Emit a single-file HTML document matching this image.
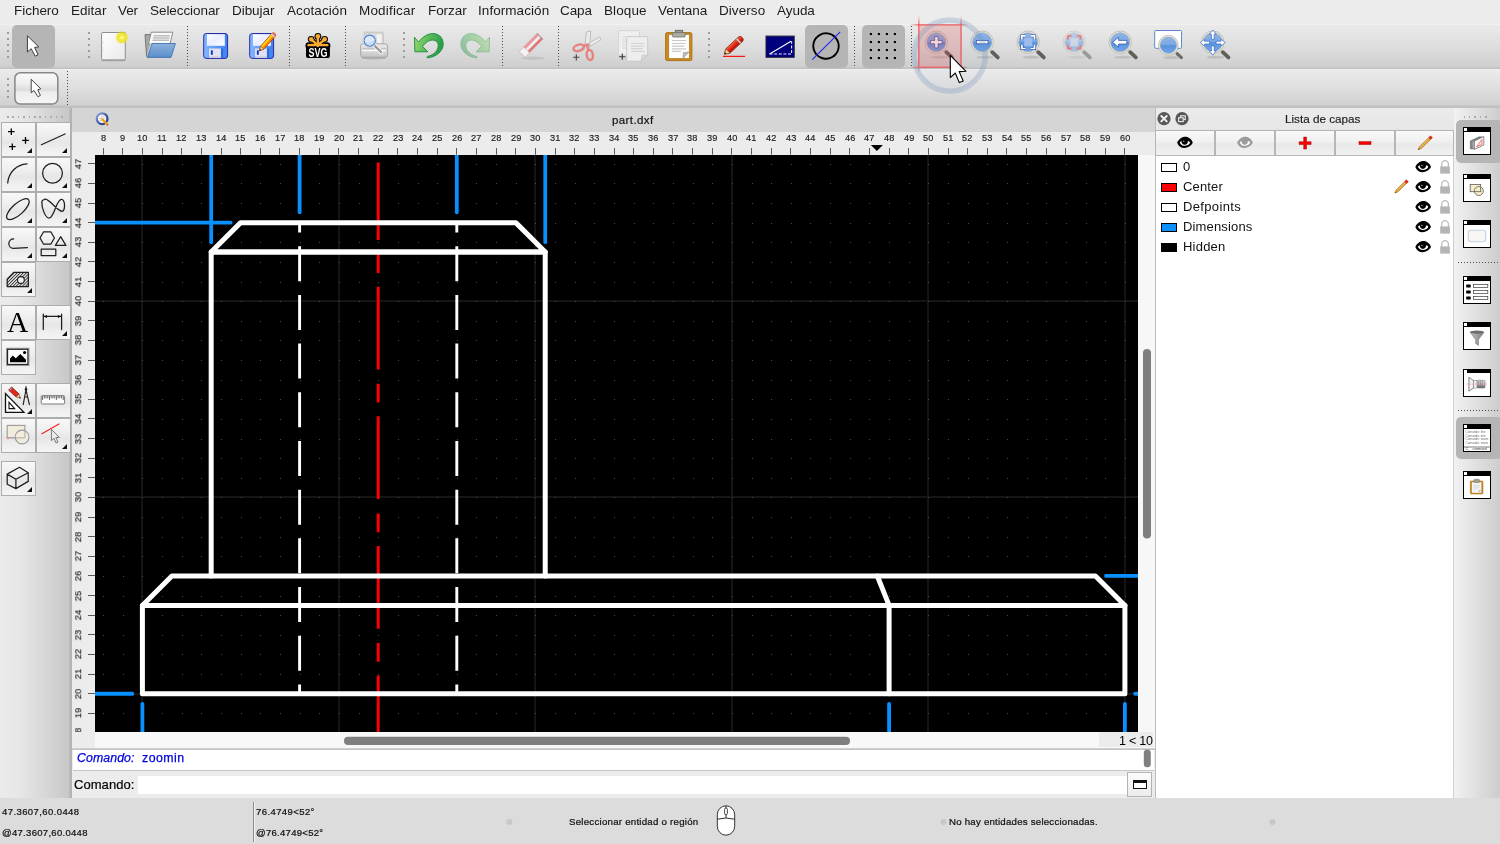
<!DOCTYPE html>
<html lang="es"><head><meta charset="utf-8"><title>QCAD - part.dxf</title>
<style>

html,body{margin:0;padding:0;}
body{width:1500px;height:844px;overflow:hidden;position:relative;background:#ececec;font-family:"Liberation Sans",sans-serif;}
.t{position:absolute;white-space:nowrap;will-change:transform;}
.a{position:absolute;}
svg{position:absolute;overflow:visible;will-change:transform;}
#menubar{position:absolute;left:0;top:0;width:1500px;height:22px;background:#ececec;}
#tb1{position:absolute;left:0;top:22px;width:1500px;height:47px;background:linear-gradient(#ececec 0,#ececec 2px,#f4f4f4 2px,#e9e9e9 3.5px,#dedede 24px,#cfcfcf 44.5px,#c3c3c3 46px,#bfbfbf 47px);}
#tb2{position:absolute;left:0;top:69px;width:1500px;height:38px;background:linear-gradient(#f1f1f1 0,#eaeaea 1.5px,#dfdfdf 19px,#d1d1d1 35.5px,#c4c4c4 37px,#bdbdbd 38px);}
#sep107{position:absolute;left:0;top:107px;width:1500px;height:1px;background:#c0c0c0;}
.sel{position:absolute;background:#b5b5b5;border-radius:5px;}
.grip{position:absolute;width:2px;height:2px;background:#9c9c9c;}
.vsep{position:absolute;width:1px;background:repeating-linear-gradient(180deg,#4a4a4a 0,#4a4a4a 1px,transparent 1px,transparent 3px);}
#toolbox{position:absolute;left:0;top:108px;width:72px;height:690px;background:linear-gradient(90deg,#ebebeb 0%,#e6e6e6 30%,#c8c8c8 95%,#b4b4b4 98%,#b4b4b4 100%);}
.tbtn{position:absolute;width:33px;height:33px;border:1px solid #adadad;background:linear-gradient(#f8f8f8 0%,#efefef 35%,#e6e6e6 58%,#efefef 80%,#f4f4f4 100%);box-sizing:content-box;}
.tbtn:after{content:"";position:absolute;right:3.2px;bottom:3.2px;border-style:solid;border-width:0 0 5.2px 5.2px;border-color:transparent transparent #111 transparent;}
.tbtn.na:after{display:none;}
#main{position:absolute;left:72px;top:108px;width:1083px;height:690px;background:#ececec;}
#tabbar{position:absolute;left:0;top:0;width:1083px;height:24px;background:#d5d5d5;}
#canvas{position:absolute;left:23px;top:47px;width:1043px;height:577px;background:#000;overflow:hidden;}
#layers{position:absolute;left:1155px;top:108px;width:299px;height:690px;background:#fff;}
#rtb{position:absolute;left:1454px;top:108px;width:46px;height:690px;background:linear-gradient(90deg,#f2f2f2 0%,#e8e8e8 25%,#cdcdcd 100%);}
#status{position:absolute;left:0;top:798px;width:1500px;height:46px;background:#dcdcdc;}
.lbtn{position:absolute;top:22px;height:26px;border:1px solid #b6b6b6;background:linear-gradient(#f9f9f9,#f0f0f0 45%,#e8e8e8 55%,#f1f1f1);box-sizing:border-box;}
.ricon{position:absolute;left:9px;width:26px;height:26px;border:1px solid #000;background:#fff;}
.ricon:before{content:"";position:absolute;left:0;top:0;width:26px;height:3.8px;background:#000;}
.ricon:after{content:"";position:absolute;left:0;top:0;width:3.4px;height:3.2px;background:#fff;}
.hsep{position:absolute;left:4px;width:42px;height:1px;background:repeating-linear-gradient(90deg,#4a4a4a 0,#4a4a4a 1px,transparent 1px,transparent 3px);}

</style></head>
<body>
<div id="menubar"><div class="t" style="left:13.80px;top:3.38px;font-size:13.5px;line-height:15.08px;color:#1c1c1c;letter-spacing:-0.031px;">Fichero</div><div class="t" style="left:70.60px;top:3.38px;font-size:13.5px;line-height:15.08px;color:#1c1c1c;letter-spacing:0.022px;">Editar</div><div class="t" style="left:117.70px;top:3.38px;font-size:13.5px;line-height:15.08px;color:#1c1c1c;letter-spacing:-0.121px;">Ver</div><div class="t" style="left:149.90px;top:3.38px;font-size:13.5px;line-height:15.08px;color:#1c1c1c;letter-spacing:-0.067px;">Seleccionar</div><div class="t" style="left:231.90px;top:3.38px;font-size:13.5px;line-height:15.08px;color:#1c1c1c;letter-spacing:-0.052px;">Dibujar</div><div class="t" style="left:286.80px;top:3.38px;font-size:13.5px;line-height:15.08px;color:#1c1c1c;letter-spacing:0.079px;">Acotación</div><div class="t" style="left:359.00px;top:3.38px;font-size:13.5px;line-height:15.08px;color:#1c1c1c;letter-spacing:0.182px;">Modificar</div><div class="t" style="left:427.50px;top:3.38px;font-size:13.5px;line-height:15.08px;color:#1c1c1c;letter-spacing:-0.067px;">Forzar</div><div class="t" style="left:477.50px;top:3.38px;font-size:13.5px;line-height:15.08px;color:#1c1c1c;letter-spacing:0.061px;">Información</div><div class="t" style="left:560.20px;top:3.38px;font-size:13.5px;line-height:15.08px;color:#1c1c1c;letter-spacing:-0.093px;">Capa</div><div class="t" style="left:603.50px;top:3.38px;font-size:13.5px;line-height:15.08px;color:#1c1c1c;letter-spacing:0.094px;">Bloque</div><div class="t" style="left:657.90px;top:3.38px;font-size:13.5px;line-height:15.08px;color:#1c1c1c;letter-spacing:-0.050px;">Ventana</div><div class="t" style="left:718.50px;top:3.38px;font-size:13.5px;line-height:15.08px;color:#1c1c1c;letter-spacing:0.063px;">Diverso</div><div class="t" style="left:776.90px;top:3.38px;font-size:13.5px;line-height:15.08px;color:#1c1c1c;letter-spacing:-0.047px;">Ayuda</div></div>
<div id="tb1"><div class="grip" style="left:7px;top:10px"></div><div class="grip" style="left:7px;top:16px"></div><div class="grip" style="left:7px;top:22px"></div><div class="grip" style="left:7px;top:28px"></div><div class="grip" style="left:7px;top:34px"></div><div class="sel" style="left:12px;top:3px;width:43px;height:43px"></div><div class="grip" style="left:88px;top:10px"></div><div class="grip" style="left:88px;top:16px"></div><div class="grip" style="left:88px;top:22px"></div><div class="grip" style="left:88px;top:28px"></div><div class="grip" style="left:88px;top:34px"></div><div class="vsep" style="left:187px;top:4px;height:41px"></div><div class="vsep" style="left:289px;top:4px;height:41px"></div><div class="vsep" style="left:345px;top:4px;height:41px"></div><div class="vsep" style="left:502px;top:4px;height:41px"></div><div class="vsep" style="left:558px;top:4px;height:41px"></div><div class="vsep" style="left:854px;top:4px;height:41px"></div><div class="vsep" style="left:911px;top:4px;height:41px"></div><div class="grip" style="left:403px;top:10px"></div><div class="grip" style="left:403px;top:16px"></div><div class="grip" style="left:403px;top:22px"></div><div class="grip" style="left:403px;top:28px"></div><div class="grip" style="left:403px;top:34px"></div><div class="grip" style="left:708px;top:10px"></div><div class="grip" style="left:708px;top:16px"></div><div class="grip" style="left:708px;top:22px"></div><div class="grip" style="left:708px;top:28px"></div><div class="grip" style="left:708px;top:34px"></div><div class="sel" style="left:805px;top:3px;width:43px;height:43px"></div><div class="sel" style="left:862px;top:3px;width:43px;height:43px"></div><svg style="left:0;top:0" width="1500" height="47" viewBox="0 22 1500 47"><defs>
<linearGradient id="gPaper" x1="0" y1="0" x2="1" y2="1"><stop offset="0" stop-color="#fff"/><stop offset="1" stop-color="#e9e9e9"/></linearGradient>
<radialGradient id="gGlow"><stop offset="0" stop-color="#fffff0"/><stop offset="0.25" stop-color="#f6ee50"/><stop offset="0.6" stop-color="#eee420" stop-opacity="0.95"/><stop offset="1" stop-color="#e8e020" stop-opacity="0"/></radialGradient>
<linearGradient id="gFold" x1="0" y1="0" x2="0" y2="1"><stop offset="0" stop-color="#8db2dd"/><stop offset="1" stop-color="#5a8ecb"/></linearGradient>
<linearGradient id="gFlop" x1="0" y1="0" x2="1" y2="0"><stop offset="0" stop-color="#86b8ff"/><stop offset="0.5" stop-color="#5a9af8"/><stop offset="1" stop-color="#3d82ee"/></linearGradient>
<linearGradient id="gLabel" x1="0" y1="0" x2="1" y2="1"><stop offset="0" stop-color="#fff"/><stop offset="0.5" stop-color="#e9edff"/><stop offset="1" stop-color="#fff"/></linearGradient>
<linearGradient id="gPen" x1="0" y1="0" x2="0" y2="1"><stop offset="0" stop-color="#ffdf30"/><stop offset="0.45" stop-color="#ffd000"/><stop offset="0.55" stop-color="#ff9800"/><stop offset="1" stop-color="#f07800"/></linearGradient>
<linearGradient id="gUndo" x1="0" y1="0" x2="1" y2="0.3"><stop offset="0" stop-color="#a2dc70"/><stop offset="0.5" stop-color="#5cbc5a"/><stop offset="1" stop-color="#2c9c4c"/></linearGradient>
<linearGradient id="gLens" x1="0" y1="0" x2="0" y2="1"><stop offset="0" stop-color="#8fb5e8"/><stop offset="0.48" stop-color="#7aa7e2"/><stop offset="0.5" stop-color="#5a92dc"/><stop offset="1" stop-color="#6fa6ea"/></linearGradient>
<linearGradient id="gPrn" x1="0" y1="0" x2="0" y2="1"><stop offset="0" stop-color="#e9e9e9"/><stop offset="1" stop-color="#c6c6c6"/></linearGradient>
<linearGradient id="gRedPen" x1="0" y1="0" x2="0" y2="1"><stop offset="0" stop-color="#f46a50"/><stop offset="0.5" stop-color="#e22418"/><stop offset="1" stop-color="#b01008"/></linearGradient>
</defs><path d="M27.4 35.8 V52 L31.2 48.7 L35.2 56.2 L38.1 54.7 L34.6 47.5 L38.7 46.8 Z" fill="#fff" stroke="#3c3c3c" stroke-width="1" stroke-linejoin="round"/><rect x="101.6" y="59.2" width="23.8" height="2" rx="1" fill="#8a8a8a" opacity="0.55"/><rect x="101.6" y="32.5" width="23.7" height="27.4" rx="1.2" fill="url(#gPaper)" stroke="#8e8e8e" stroke-width="1"/><rect x="103" y="42" width="1.2" height="0.8" fill="#ccc"/><rect x="103" y="49.5" width="1.2" height="0.8" fill="#ccc"/><circle cx="121.9" cy="37.5" r="7" fill="url(#gGlow)"/><path d="M145 34.6 H151 L150 56.3 H146.6 Z" fill="#a9a9a9" stroke="#6d6d6d" stroke-width="0.9" stroke-linejoin="round"/><path d="M151.3 32.2 H172.8 L170 44 H148.4 Z" fill="#f9f9f9" stroke="#808080" stroke-width="0.9" stroke-linejoin="round"/><path d="M153.5 35.8 H170 M153 38 H169.5 M152.5 40.3 H169" stroke="#bdbdbd" stroke-width="1.5"/><path d="M151.2 43.6 V44 L147.5 56.6" fill="none" stroke="#fff" stroke-width="1.2"/><path d="M152 43.5 H175.4 L171 57.4 H147.3 Z" fill="url(#gFold)" stroke="#3f73b0" stroke-width="0.9" stroke-linejoin="round"/><rect x="203.7" y="33.5" width="23.9" height="24.9" rx="2.6" fill="url(#gFlop)" stroke="#2a2aa6" stroke-width="1"/><rect x="207" y="34.2" width="17.8" height="11.6" fill="url(#gLabel)"/><rect x="209" y="48.5" width="11.9" height="9.4" fill="#e2e2ee"/><rect x="209" y="56.4" width="11.9" height="1.5" fill="#c9c9dc"/><rect x="210.9" y="50.3" width="1.9" height="4.5" fill="#0a34e0"/><rect x="221" y="48.5" width="2.2" height="9.4" fill="#2a6be6"/><rect x="249.7" y="33.5" width="23.9" height="24.9" rx="2.6" fill="url(#gFlop)" stroke="#2a2aa6" stroke-width="1"/><rect x="253" y="34.2" width="17.8" height="11.6" fill="url(#gLabel)"/><rect x="255" y="48.5" width="11.9" height="9.4" fill="#e2e2ee"/><rect x="255" y="56.4" width="11.9" height="1.5" fill="#c9c9dc"/><rect x="256.9" y="50.3" width="1.9" height="4.5" fill="#0a34e0"/><rect x="267" y="48.5" width="2.2" height="9.4" fill="#2a6be6"/><g transform="translate(259.5 50.7) rotate(-48.3)"><path d="M0 0 L4.2 -2.2 H21 Q23.2 -2.2 23.2 0 Q23.2 2.2 21 2.2 H4.2 Z" fill="url(#gPen)" stroke="#c43a00" stroke-width="0.8" stroke-linejoin="round"/><path d="M0 0 L4.2 -2.2 V2.2 Z" fill="#f0d8b0" stroke="#8a4a20" stroke-width="0.6"/><path d="M0 0 L1.6 -0.85 V0.85 Z" fill="#222"/><rect x="19.5" y="-2.2" width="1.5" height="4.4" fill="#d8d8d0"/><path d="M21 -2.2 Q23.2 -2.2 23.2 0 Q23.2 2.2 21 2.2 Z" fill="#e87070"/></g><path d="M317.9 45.7 L317.9 36.3" stroke="#000" stroke-width="4.5" stroke-linecap="round"/><circle cx="317.9" cy="36.3" r="3.4" fill="#000"/><path d="M317.9 45.7 L311.2 39.3" stroke="#000" stroke-width="4.5" stroke-linecap="round"/><circle cx="311.2" cy="39.3" r="3.4" fill="#000"/><path d="M317.9 45.7 L324.6 39.3" stroke="#000" stroke-width="4.5" stroke-linecap="round"/><circle cx="324.6" cy="39.3" r="3.4" fill="#000"/><path d="M317.9 45.7 L308.8 45.7" stroke="#000" stroke-width="4.5" stroke-linecap="round"/><circle cx="308.8" cy="45.7" r="3.4" fill="#000"/><path d="M317.9 45.7 L327 45.7" stroke="#000" stroke-width="4.5" stroke-linecap="round"/><circle cx="327" cy="45.7" r="3.4" fill="#000"/><rect x="306" y="44.4" width="23.9" height="13.6" rx="2.6" fill="#000"/><path d="M317.9 45.4 L317.9 36.3" stroke="#f9a92e" stroke-width="2.5" stroke-linecap="round"/><circle cx="317.9" cy="36.3" r="2.35" fill="#f9a92e"/><path d="M317.9 45.4 L311.2 39.3" stroke="#f9a92e" stroke-width="2.5" stroke-linecap="round"/><circle cx="311.2" cy="39.3" r="2.35" fill="#f9a92e"/><path d="M317.9 45.4 L324.6 39.3" stroke="#f9a92e" stroke-width="2.5" stroke-linecap="round"/><circle cx="324.6" cy="39.3" r="2.35" fill="#f9a92e"/><path d="M308.3 45.2 H327.5" stroke="#f9a92e" stroke-width="2.2" stroke-linecap="round"/><text x="318" y="57.1" text-anchor="middle" font-family="Liberation Sans, sans-serif" font-weight="bold" font-size="13.4" textLength="19" lengthAdjust="spacingAndGlyphs" fill="#fff">SVG</text><ellipse cx="374" cy="57.8" rx="13" ry="1.6" fill="#888" opacity="0.45"/><rect x="364.4" y="32.2" width="18.8" height="13" rx="0.8" fill="#dcdcdc" stroke="#bcbcbc" stroke-width="0.9"/><rect x="376.5" y="34.5" width="5" height="8.5" fill="#f4f4f4"/><rect x="360.6" y="43.8" width="27" height="13.4" rx="2.4" fill="url(#gPrn)" stroke="#a2a2a2" stroke-width="0.9"/><rect x="362.2" y="48.3" width="23.8" height="1.3" fill="#b9b9b9"/><rect x="362.2" y="49.6" width="23.8" height="1.6" fill="#fbfbfb"/><path d="M374.6 45.6 L381.2 52.2" stroke="#fafafa" stroke-width="4.2" stroke-linecap="round"/><path d="M374.6 45.6 L381.2 52.2" stroke="#9a9a9a" stroke-width="2.3" stroke-linecap="round"/><circle cx="369.7" cy="40.7" r="7" fill="#f4f4f2" stroke="#c9c9c4" stroke-width="0.8"/><circle cx="369.7" cy="40.7" r="5.6" fill="#c9dcf4" stroke="#3c7ad0" stroke-width="1.1"/><path d="M364.6 41.6 A5.2 5.2 0 0 1 374.8 40 Q370 42.6 364.6 41.6 Z" fill="#e4eefb" opacity="0.8"/><path d="M414.4 37.2 L418.6 42.2 C423 36 429 33.2 434 33.6 C440 34.2 443.4 39 443.2 44.5 C443 51 436 57.3 427.6 57.8 C426.6 57.8 426.6 56.6 427.6 56.4 C434 55 438.2 50.5 438.2 45.5 C438.2 42 436 40.2 432.5 40.1 C429 40 425.5 42.5 422.5 46.4 L427.8 51.8 L414.9 51.8 Z" fill="url(#gUndo)" stroke="#1c8a3c" stroke-width="0.9" stroke-linejoin="round"/><g transform="translate(904 0) scale(-1 1)" opacity="0.42"><path d="M414.4 37.2 L418.6 42.2 C423 36 429 33.2 434 33.6 C440 34.2 443.4 39 443.2 44.5 C443 51 436 57.3 427.6 57.8 C426.6 57.8 426.6 56.6 427.6 56.4 C434 55 438.2 50.5 438.2 45.5 C438.2 42 436 40.2 432.5 40.1 C429 40 425.5 42.5 422.5 46.4 L427.8 51.8 L414.9 51.8 Z" fill="url(#gUndo)" stroke="#1c8a3c" stroke-width="0.9" stroke-linejoin="round"/></g><ellipse cx="533" cy="58.2" rx="12" ry="1.6" fill="#999" opacity="0.3"/><g transform="translate(531.2 45.2) rotate(-45.4)"><rect x="-12.9" y="-4.2" width="25.8" height="8.4" rx="0.8" fill="#e07a7a"/><rect x="-7" y="-4.2" width="19.9" height="2.9" fill="#ea9c9c"/><rect x="-7" y="-1.3" width="19.9" height="2.7" fill="#f1efef"/><rect x="-12.9" y="-4.2" width="6.3" height="8.4" fill="#f3f3f3" stroke="#d0b0b0" stroke-width="0.5"/><rect x="11.8" y="-4.2" width="1.1" height="8.4" fill="#a89a9a"/></g><path d="M586.3 32 L590.7 31 L589.8 46.5 L585 45.2 Z" fill="#e9e9e9" stroke="#b2b2b2" stroke-width="0.8" stroke-linejoin="round"/><path d="M589.6 42.8 L599.9 36.9 L600.9 39.8 L590 46.4 Z" fill="#ececec" stroke="#b2b2b2" stroke-width="0.8" stroke-linejoin="round"/><g fill="none" stroke="#e58484" stroke-width="2.5"><ellipse cx="578.7" cy="47.8" rx="5.3" ry="3.1" transform="rotate(-17 578.7 47.8)"/><ellipse cx="589.8" cy="55" rx="3.1" ry="5" transform="rotate(-8 589.8 55)"/><path d="M583.5 46 L588 44.6 M588.2 50 L587.4 45.5" stroke-width="2.6" stroke-linecap="round"/></g><path d="M573.2 57.3 H579.4 M576.3 54.2 V60.4" stroke="#444" stroke-width="1.1"/><rect x="618.6" y="30.6" width="20.9" height="24.6" rx="1.2" fill="#efefef" stroke="#d2d2d2" stroke-width="0.9"/><path d="M622 37 H627 M622 39.8 H627 M622 42.4 H627 M622 45.2 H627 M622 48 H627" stroke="#dcdcdc" stroke-width="1.3"/><path d="M626.7 37.5 Q626.7 36.6 627.6 36.6 H646.8 Q647.7 36.6 647.7 37.5 V54.8 L641.3 61.2 H627.6 Q626.7 61.2 626.7 60.3 Z" fill="#eeeeee" stroke="#c6c6c6" stroke-width="0.9"/><path d="M631 43.5 H644.6 M631 46.1 H644 M631 48.7 H642.6 M631 51.4 H644.6" stroke="#d4d4d4" stroke-width="1.2"/><path d="M641.3 61.2 L641.9 55.4 L647.7 54.8 Z" fill="#dadada" stroke="#c0c0c0" stroke-width="0.6"/><path d="M619.2 56.7 H625.4 M622.3 53.6 V59.8" stroke="#3a3a3a" stroke-width="1.1"/><rect x="665.6" y="32.6" width="26.3" height="28" rx="1.6" fill="#cc8a1c" stroke="#a86c10" stroke-width="0.9"/><rect x="668.8" y="34.5" width="20.4" height="23.8" fill="#fdfdfd" stroke="#9a6a20" stroke-width="0.5"/><path d="M672 40.5 H686 M672 43.5 H685.6 M672 46.1 H684.2 M672 48.8 H686 M672 51.4 H680.8" stroke="#c9c9c9" stroke-width="1.2"/><path d="M683 58.3 L683.4 52.6 L689.2 52 Z" fill="#bdbdbd" stroke="#8e8e8e" stroke-width="0.6"/><rect x="675.2" y="30.3" width="7.5" height="3.4" fill="#9c9c90" stroke="#5e5e58" stroke-width="0.8"/><rect x="672.4" y="32.6" width="12.9" height="4.4" rx="1.3" fill="#adad9f" stroke="#6e6e66" stroke-width="0.8"/><g transform="translate(724.4 54.2) rotate(-43)"><path d="M0 0 L4.8 -3 H22 Q24.4 -3 24.4 0 Q24.4 3 22 3 H4.8 Z" fill="url(#gRedPen)" stroke="#8a3008" stroke-width="0.8" stroke-linejoin="round"/><path d="M0 0 L4.8 -3 V3 Z" fill="#efd2a8" stroke="#8a4a20" stroke-width="0.6"/><path d="M0 0 L1.8 -1.05 V1.05 Z" fill="#222"/><rect x="18.6" y="-3" width="1.7" height="6" fill="#c9c9c4"/></g><rect x="723" y="55.8" width="22" height="1.1" fill="#f00"/><rect x="766" y="36.1" width="28.2" height="21.2" fill="#00007e" stroke="#222238" stroke-width="1"/><path d="M769.6 54 L791 41.2" stroke="#fff" stroke-width="1.1"/><path d="M769.6 54 H791.6 V41.2" fill="none" stroke="#e8e8ff" stroke-width="1.1" stroke-dasharray="3 1.6"/><circle cx="826" cy="46" r="12.7" fill="none" stroke="#000" stroke-width="1.9" stroke-dasharray="3.2 0 0 0"/><path d="M812.2 59.7 L840.2 31.9" stroke="#1e28f0" stroke-width="1.1"/><rect x="869.85" y="32.95" width="2.1" height="2.1" fill="#000"/><rect x="869.85" y="40.95" width="2.1" height="2.1" fill="#000"/><rect x="869.85" y="48.95" width="2.1" height="2.1" fill="#000"/><rect x="869.85" y="56.95" width="2.1" height="2.1" fill="#000"/><rect x="877.85" y="32.95" width="2.1" height="2.1" fill="#000"/><rect x="877.85" y="40.95" width="2.1" height="2.1" fill="#000"/><rect x="877.85" y="48.95" width="2.1" height="2.1" fill="#000"/><rect x="877.85" y="56.95" width="2.1" height="2.1" fill="#000"/><rect x="885.85" y="32.95" width="2.1" height="2.1" fill="#000"/><rect x="885.85" y="40.95" width="2.1" height="2.1" fill="#000"/><rect x="885.85" y="48.95" width="2.1" height="2.1" fill="#000"/><rect x="885.85" y="56.95" width="2.1" height="2.1" fill="#000"/><rect x="893.85" y="32.95" width="2.1" height="2.1" fill="#000"/><rect x="893.85" y="40.95" width="2.1" height="2.1" fill="#000"/><rect x="893.85" y="48.95" width="2.1" height="2.1" fill="#000"/><rect x="893.85" y="56.95" width="2.1" height="2.1" fill="#000"/><g><ellipse cx="939.3" cy="57.3" rx="9" ry="1.5" fill="#888" opacity="0.3"/><path d="M943.0999999999999 49.2 L946.3 52.400000000000006" stroke="#b9b9b4" stroke-width="2.2" stroke-linecap="round"/><path d="M946.3 52.2 L951.9 57.400000000000006" stroke="#d6d6d2" stroke-width="5" stroke-linecap="round"/><path d="M946.3 52.2 L951.9 57.400000000000006" stroke="#5f5f5b" stroke-width="3.8" stroke-linecap="round"/><circle cx="936.3" cy="42.2" r="11.2" fill="#eceae0" stroke="#b4b4a6" stroke-width="0.8"/><circle cx="936.3" cy="42.2" r="9.5" fill="url(#gLens)" stroke="#9aa6b6" stroke-width="0.7"/><path d="M934.7 36.4 H938 V40.5 H942.1 V43.8 H938 V47.9 H934.7 V43.8 H930.5 V40.5 H934.7 Z" fill="#fff" stroke="#2a4ea8" stroke-width="0.7"/></g><g><ellipse cx="985.2" cy="57.3" rx="9" ry="1.5" fill="#888" opacity="0.3"/><path d="M989.0 49.2 L992.2 52.400000000000006" stroke="#b9b9b4" stroke-width="2.2" stroke-linecap="round"/><path d="M992.2 52.2 L997.8000000000001 57.400000000000006" stroke="#d6d6d2" stroke-width="5" stroke-linecap="round"/><path d="M992.2 52.2 L997.8000000000001 57.400000000000006" stroke="#5f5f5b" stroke-width="3.8" stroke-linecap="round"/><circle cx="982.2" cy="42.2" r="11.2" fill="#eceae0" stroke="#b4b4a6" stroke-width="0.8"/><circle cx="982.2" cy="42.2" r="9.5" fill="url(#gLens)" stroke="#9aa6b6" stroke-width="0.7"/><rect x="976.3" y="40.6" width="11.7" height="3.2" fill="#fff" stroke="#2a4ea8" stroke-width="0.7"/></g><g><ellipse cx="1031.2" cy="57.3" rx="9" ry="1.5" fill="#888" opacity="0.3"/><path d="M1035.0 49.2 L1038.2 52.400000000000006" stroke="#b9b9b4" stroke-width="2.2" stroke-linecap="round"/><path d="M1038.2 52.2 L1043.8 57.400000000000006" stroke="#d6d6d2" stroke-width="5" stroke-linecap="round"/><path d="M1038.2 52.2 L1043.8 57.400000000000006" stroke="#5f5f5b" stroke-width="3.8" stroke-linecap="round"/><circle cx="1028.2" cy="42.2" r="11.2" fill="#eceae0" stroke="#b4b4a6" stroke-width="0.8"/><circle cx="1028.2" cy="42.2" r="9.5" fill="url(#gLens)" stroke="#9aa6b6" stroke-width="0.7"/><rect x="1024.2" y="38.2" width="8" height="8" fill="#9cbcec"/><path d="M1021.9000000000001 39.4 V35.9 H1025.6000000000001 M1030.8 35.9 H1034.5 V39.4 M1034.5 45 V48.5 H1030.8 M1025.6000000000001 48.5 H1021.9000000000001 V45" fill="none" stroke="#2a4ea8" stroke-width="2.9"/><path d="M1021.9000000000001 39.4 V35.9 H1025.6000000000001 M1030.8 35.9 H1034.5 V39.4 M1034.5 45 V48.5 H1030.8 M1025.6000000000001 48.5 H1021.9000000000001 V45" fill="none" stroke="#fff" stroke-width="1.7"/></g><g opacity="0.5"><ellipse cx="1077.2" cy="57.3" rx="9" ry="1.5" fill="#888" opacity="0.3"/><path d="M1081.0 49.2 L1084.2 52.400000000000006" stroke="#b9b9b4" stroke-width="2.2" stroke-linecap="round"/><path d="M1084.2 52.2 L1089.8 57.400000000000006" stroke="#d6d6d2" stroke-width="5" stroke-linecap="round"/><path d="M1084.2 52.2 L1089.8 57.400000000000006" stroke="#5f5f5b" stroke-width="3.8" stroke-linecap="round"/><circle cx="1074.2" cy="42.2" r="11.2" fill="#eceae0" stroke="#b4b4a6" stroke-width="0.8"/><circle cx="1074.2" cy="42.2" r="9.5" fill="url(#gLens)" stroke="#9aa6b6" stroke-width="0.7"/><rect x="1070.2" y="38.2" width="8" height="8" fill="#b8cdec"/><path d="M1067.9 39.4 V35.9 H1071.6000000000001 M1076.8 35.9 H1080.5 V39.4 M1080.5 45 V48.5 H1076.8 M1071.6000000000001 48.5 H1067.9 V45" fill="none" stroke="#f02020" stroke-width="1.9"/></g><g><ellipse cx="1123.2" cy="57.3" rx="9" ry="1.5" fill="#888" opacity="0.3"/><path d="M1127.0 49.2 L1130.2 52.400000000000006" stroke="#b9b9b4" stroke-width="2.2" stroke-linecap="round"/><path d="M1130.2 52.2 L1135.8 57.400000000000006" stroke="#d6d6d2" stroke-width="5" stroke-linecap="round"/><path d="M1130.2 52.2 L1135.8 57.400000000000006" stroke="#5f5f5b" stroke-width="3.8" stroke-linecap="round"/><circle cx="1120.2" cy="42.2" r="11.2" fill="#eceae0" stroke="#b4b4a6" stroke-width="0.8"/><circle cx="1120.2" cy="42.2" r="9.5" fill="url(#gLens)" stroke="#9aa6b6" stroke-width="0.7"/><path d="M1112.6000000000001 42.2 L1118.6000000000001 37.3 V40.4 H1126.8 V44 H1118.6000000000001 V47.1 Z" fill="#fff" stroke="#2a4ea8" stroke-width="0.7" stroke-linejoin="round"/></g><rect x="1154.7" y="30.5" width="26.8" height="17.8" rx="1" fill="#fff" stroke="#4d7cc8" stroke-width="0.9"/><g><ellipse cx="1172" cy="57.6" rx="9" ry="1.5" fill="#888" opacity="0.3"/><path d="M1174.6 51.6 L1177.4 54.4" stroke="#b9b9b4" stroke-width="2.2" stroke-linecap="round"/><path d="M1177.2 53.8 L1181.4 57.6" stroke="#dcdcda" stroke-width="4.6" stroke-linecap="round"/><path d="M1177.2 53.8 L1181.4 57.6" stroke="#6a6a66" stroke-width="3.2" stroke-linecap="round"/><circle cx="1168.4" cy="45.3" r="9.9" fill="#eceae0" stroke="#b4b4a6" stroke-width="0.8"/><circle cx="1168.4" cy="45.3" r="8.2" fill="url(#gLens)" stroke="#9aa6b6" stroke-width="0.6"/></g><g><ellipse cx="1215.8" cy="57.3" rx="9" ry="1.5" fill="#888" opacity="0.3"/><path d="M1219.6 49.2 L1222.8 52.400000000000006" stroke="#b9b9b4" stroke-width="2.2" stroke-linecap="round"/><path d="M1222.8 52.2 L1228.3999999999999 57.400000000000006" stroke="#d6d6d2" stroke-width="5" stroke-linecap="round"/><path d="M1222.8 52.2 L1228.3999999999999 57.400000000000006" stroke="#5f5f5b" stroke-width="3.8" stroke-linecap="round"/><circle cx="1212.8" cy="42.2" r="11.2" fill="#eceae0" stroke="#b4b4a6" stroke-width="0.8"/><circle cx="1212.8" cy="42.2" r="9.5" fill="url(#gLens)" stroke="#9aa6b6" stroke-width="0.7"/><path d="M1212.8 30.0 l3.3 4.3 h-1.9 v5 h-2.8 v-5 h-1.9 Z" transform="rotate(0 1212.8 42.6)" fill="#fff" stroke="#3c6cc4" stroke-width="0.7" stroke-linejoin="round"/><path d="M1212.8 30.0 l3.3 4.3 h-1.9 v5 h-2.8 v-5 h-1.9 Z" transform="rotate(90 1212.8 42.6)" fill="#fff" stroke="#3c6cc4" stroke-width="0.7" stroke-linejoin="round"/><path d="M1212.8 30.0 l3.3 4.3 h-1.9 v5 h-2.8 v-5 h-1.9 Z" transform="rotate(180 1212.8 42.6)" fill="#fff" stroke="#3c6cc4" stroke-width="0.7" stroke-linejoin="round"/><path d="M1212.8 30.0 l3.3 4.3 h-1.9 v5 h-2.8 v-5 h-1.9 Z" transform="rotate(270 1212.8 42.6)" fill="#fff" stroke="#3c6cc4" stroke-width="0.7" stroke-linejoin="round"/></g></svg></div>
<div id="tb2"><div class="grip" style="left:7px;top:9px"></div><div class="grip" style="left:7px;top:15px"></div><div class="grip" style="left:7px;top:21px"></div><div class="grip" style="left:7px;top:27px"></div><div class="a" style="left:14.5px;top:3.5px;width:43.5px;height:31.5px;border-radius:5.5px;background:linear-gradient(#fafafa 0%,#f0f0f0 30%,#dcdcdc 55%,#ededed 62%,#f6f6f6 100%)"></div><svg style="left:0;top:0" width="70" height="38"><rect x="14.9" y="3.8" width="42.9" height="31.2" rx="5.4" fill="none" stroke="#868686" stroke-width="1.5"/></svg><div class="vsep" style="left:67px;top:2px;height:34px"></div><svg style="left:0;top:0" width="100" height="38" viewBox="0 69 100 38"><path d="M31.2 79.3 V92.8 L34 90.5 L37.9 96.7 L40.4 95.4 L37.7 89.8 L40.8 88.8 Z" fill="#fff" stroke="#3c3c3c" stroke-width="0.95" stroke-linejoin="round"/></svg></div><div id="sep107"></div>
<div id="toolbox"><div class="grip" style="left:7.0px;top:8px;width:1.6px;height:1.6px;background:#aaa"></div><div class="grip" style="left:12.4px;top:8px;width:1.6px;height:1.6px;background:#aaa"></div><div class="grip" style="left:17.8px;top:8px;width:1.6px;height:1.6px;background:#aaa"></div><div class="grip" style="left:23.2px;top:8px;width:1.6px;height:1.6px;background:#aaa"></div><div class="grip" style="left:28.6px;top:8px;width:1.6px;height:1.6px;background:#aaa"></div><div class="grip" style="left:34.0px;top:8px;width:1.6px;height:1.6px;background:#aaa"></div><div class="grip" style="left:39.4px;top:8px;width:1.6px;height:1.6px;background:#aaa"></div><div class="grip" style="left:44.8px;top:8px;width:1.6px;height:1.6px;background:#aaa"></div><div class="grip" style="left:50.2px;top:8px;width:1.6px;height:1.6px;background:#aaa"></div><div class="grip" style="left:55.6px;top:8px;width:1.6px;height:1.6px;background:#aaa"></div><div class="grip" style="left:61.0px;top:8px;width:1.6px;height:1.6px;background:#aaa"></div><div class="tbtn" id="tb_122_0" style="left:1px;top:14px"><svg style="left:0;top:0" width="33" height="33" viewBox="2 123 33 33"><path d="M8.0 131.7 H14.600000000000001 M11.3 128.39999999999998 V135.0 M22.2 140.4 H28.8 M25.5 137.1 V143.70000000000002 M9.0 146.7 H15.600000000000001 M12.3 143.39999999999998 V150.0" stroke="#000" stroke-width="1.3" fill="none"/></svg></div><div class="tbtn" id="tb_122_1" style="left:36px;top:14px"><svg style="left:0;top:0" width="33" height="33" viewBox="37 123 33 33"><path d="M41.4 144.7 L65 134" stroke="#1e1e1e" stroke-width="1.25" fill="none" stroke-linecap="round" stroke-linejoin="round"/></svg></div><div class="tbtn" id="tb_157_0" style="left:1px;top:49px"><svg style="left:0;top:0" width="33" height="33" viewBox="2 158 33 33"><path d="M7.7 183 A20.5 20.5 0 0 1 27 163.9" stroke="#1e1e1e" stroke-width="1.25" fill="none" stroke-linecap="round" stroke-linejoin="round" stroke-width="1.4"/></svg></div><div class="tbtn" id="tb_157_1" style="left:36px;top:49px"><svg style="left:0;top:0" width="33" height="33" viewBox="37 158 33 33"><circle cx="52.5" cy="173.2" r="9.9" stroke="#1e1e1e" stroke-width="1.25" fill="none" stroke-linecap="round" stroke-linejoin="round"/></svg></div><div class="tbtn" id="tb_192_0" style="left:1px;top:84px"><svg style="left:0;top:0" width="33" height="33" viewBox="2 193 33 33"><ellipse cx="17.9" cy="209.2" rx="14.3" ry="5.6" transform="rotate(-42 17.9 209.2)" stroke="#1e1e1e" stroke-width="1.25" fill="none" stroke-linecap="round" stroke-linejoin="round"/></svg></div><div class="tbtn" id="tb_192_1" style="left:36px;top:84px"><svg style="left:0;top:0" width="33" height="33" viewBox="37 193 33 33"><path d="M41.8 201.5 C41.5 208 45.5 218.5 49.3 218 C54.5 217 56 200 61.3 199.3 C65.5 199 65.5 211.5 62 211.3 C56.5 210.5 49 198 44.5 199.3 C42.5 200 41.9 200.5 41.8 201.5 Z" stroke="#1e1e1e" stroke-width="1.25" fill="none" stroke-linecap="round" stroke-linejoin="round"/></svg></div><div class="tbtn" id="tb_227_0" style="left:1px;top:119px"><svg style="left:0;top:0" width="33" height="33" viewBox="2 228 33 33"><path d="M13.7 238.9 A4.7 4.7 0 0 0 13.3 248.3 L27.4 247.6" stroke="#1e1e1e" stroke-width="1.25" fill="none" stroke-linecap="round" stroke-linejoin="round"/></svg></div><div class="tbtn" id="tb_227_1" style="left:36px;top:119px"><svg style="left:0;top:0" width="33" height="33" viewBox="37 228 33 33"><polygon points="54.4,238.0 50.8,244.2 43.6,244.2 40.0,238.0 43.6,231.8 50.8,231.8" stroke="#1e1e1e" stroke-width="1.25" fill="none" stroke-linecap="round" stroke-linejoin="round"/><polygon points="60.6,236.7 55.4,245.4 65.9,245.4" stroke="#1e1e1e" stroke-width="1.25" fill="none" stroke-linecap="round" stroke-linejoin="round"/><rect x="41.2" y="249.2" width="14.6" height="6.3" stroke="#1e1e1e" stroke-width="1.25" fill="none" stroke-linecap="round" stroke-linejoin="round"/></svg></div><div class="tbtn" id="tb_262_0" style="left:1px;top:154px"><svg style="left:0;top:0" width="33" height="33" viewBox="2 263 33 33"><defs><pattern id="hat" width="2.2" height="2.2" patternUnits="userSpaceOnUse" patternTransform="rotate(-45)"><rect width="2.2" height="0.9" fill="#333"/></pattern></defs><polygon points="7.2,279.3 13.7,272.4 28.4,272.4 28.4,286.5 7.2,286.5" fill="#e9e9e9"/><polygon points="7.2,279.3 13.7,272.4 28.4,272.4 28.4,286.5 7.2,286.5" fill="url(#hat)" stroke="#1e1e1e" stroke-width="1.25"  stroke-linecap="round" stroke-linejoin="round"/><circle cx="20.9" cy="280" r="3.4" fill="#f2f2f2" stroke="#1e1e1e" stroke-width="1.1"/></svg></div><div class="tbtn na" id="tb_305_0" style="left:1px;top:197px"><svg style="left:0;top:0" width="33" height="33" viewBox="2 306 33 33"></svg></div><div class="tbtn" id="tb_305_1" style="left:36px;top:197px"><svg style="left:0;top:0" width="33" height="33" viewBox="37 306 33 33"><path d="M43.3 314.2 V329.6 M61.6 314.2 V329.6 M44 316.4 H61" stroke="#1e1e1e" stroke-width="1.25" fill="none" stroke-linecap="round" stroke-linejoin="round" stroke-linecap="butt"/><path d="M43.6 316.4 L47 314.9 V317.9 Z M61.3 316.4 L57.9 314.9 V317.9 Z" fill="#111"/></svg></div><div class="tbtn na" id="tb_340_0" style="left:1px;top:232px"><svg style="left:0;top:0" width="33" height="33" viewBox="2 341 33 33"><rect x="6.6" y="348.3" width="22.3" height="17.1" fill="#fff" stroke="#8c8c8c" stroke-width="1"/><rect x="7.6" y="349.3" width="20.3" height="15.1" fill="#fff" stroke="#1a1a1a" stroke-width="1.1"/><path d="M10 362.2 V358.4 L12.8 355.5 L15.7 358.3 L20.4 354 L26 359.8 V362.2 Z" fill="#000"/><circle cx="24.6" cy="352.5" r="1.6" fill="#000"/></svg></div><div class="tbtn" id="tb_383_0" style="left:1px;top:275px"><svg style="left:0;top:0" width="33" height="33" viewBox="2 384 33 33"><polygon points="5.5,393.6 5.5,412.4 23.9,412.4" fill="#fff" stroke="#111" stroke-width="1.3" stroke-linejoin="miter"/><polygon points="9,402.3 9,408.6 14.7,408.6" fill="#fff" stroke="#111" stroke-width="1.1"/><g transform="translate(10.2 388.6) rotate(43)"><rect x="0" y="-2.1" width="10" height="4.2" fill="#e0281c" stroke="#8a1208" stroke-width="0.7"/><rect x="0" y="-2.1" width="1.6" height="4.2" fill="#c9a" stroke="#8a1208" stroke-width="0.5"/><path d="M10 -2.1 L14.2 0 L10 2.1 Z" fill="#e8c79a" stroke="#7a4a20" stroke-width="0.6"/><path d="M12.7 -0.8 L14.4 0 L12.7 0.8 Z" fill="#222"/></g><path d="M26 386.6 V389.4 M26 389.6 L23.2 404.7 M26 389.6 L29.4 404.7 M24.6 397 H27.6" stroke="#222" stroke-width="1.15" fill="none" stroke-linecap="round"/><circle cx="26" cy="389.4" r="1.3" fill="#222"/></svg></div><div class="tbtn na" id="tb_383_1" style="left:36px;top:275px"><svg style="left:0;top:0" width="33" height="33" viewBox="37 384 33 33"><rect x="41.2" y="395.6" width="23.4" height="8.4" rx="1" fill="#fcfcfc" stroke="#7c7c7c" stroke-width="1"/><path d="M42.60 396 V400 M44.32 396 V398.4 M46.04 396 V398.4 M47.76 396 V398.4 M49.48 396 V400 M51.20 396 V398.4 M52.92 396 V398.4 M54.64 396 V398.4 M56.36 396 V400 M58.08 396 V398.4 M59.80 396 V398.4 M61.52 396 V398.4 M63.24 396 V400 " stroke="#444" stroke-width="0.8"/></svg></div><div class="tbtn na" id="tb_418_0" style="left:1px;top:310px"><svg style="left:0;top:0" width="33" height="33" viewBox="2 419 33 33"><rect x="7.2" y="425.4" width="17.7" height="12.3" fill="#f1ecdb" stroke="#9a9a9a" stroke-width="1.1"/><circle cx="22.1" cy="437" r="6.9" fill="#f1ecdb" fill-opacity="0.9" stroke="#9a9a9a" stroke-width="1.1"/><path d="M7.8 437.9 H24.9 V431" fill="none" stroke="#a9a9a9" stroke-width="0.9"/><circle cx="7.8" cy="438" r="1.3" fill="#f08c96"/></svg></div><div class="tbtn" id="tb_418_1" style="left:36px;top:310px"><svg style="left:0;top:0" width="33" height="33" viewBox="37 419 33 33"><path d="M41.9 433.7 L59 424" stroke="#f0262e" stroke-width="1.3" stroke-linecap="round"/><path d="M51.4 429.4 V440.6 L54 438.3 L56 443 L57.9 442.2 L55.9 437.6 L59.3 437.4 Z" fill="#eaeaea" stroke="#6e6e6e" stroke-width="0.9" stroke-linejoin="round"/></svg></div><div class="tbtn" id="tb_461_0" style="left:1px;top:353px"><svg style="left:0;top:0" width="33" height="33" viewBox="2 462 33 33"><path d="M19.5 467.3 L7.2 474.1 L15.9 479.2 L28.2 472.7 Z M7.2 474.1 V484.3 L15.9 488.6 V479.2 M15.9 488.6 L28.2 481.4 V472.7" stroke="#1e1e1e" stroke-width="1.25" fill="none" stroke-linecap="round" stroke-linejoin="round" stroke-width="1.3"/></svg></div><div class="t" style="left:7.2px;top:198.04px;font-family:'Liberation Serif',serif;font-size:29.5px;line-height:33px;color:#000">A</div></div>
<div id="main"><div id="tabbar"></div><svg style="left:0;top:0" width="60" height="24" viewBox="72 108 60 24"><defs><linearGradient id="gQ" x1="0" y1="0" x2="1" y2="1"><stop offset="0" stop-color="#9fb0dc"/><stop offset="0.45" stop-color="#4a64b0"/><stop offset="1" stop-color="#1a3684"/></linearGradient></defs><circle cx="102.1" cy="118.7" r="5.35" fill="#f6f6f8" stroke="url(#gQ)" stroke-width="2.3"/><path d="M99 118.4 H105 M101.6 115.6 V121.6" stroke="#b9b9c4" stroke-width="0.6"/><path d="M99.4 120.6 L101.6 120 M103 116.6 L104 115.8" stroke="#e88" stroke-width="0.6"/><path d="M102.4 119.2 L107.3 124.6" stroke="#f4b020" stroke-width="2.2" stroke-linecap="round"/><path d="M102.9 119.6 L106.6 123.7" stroke="#f88c00" stroke-width="1"/><circle cx="107.4" cy="124.6" r="1.1" fill="#e46060"/></svg><div class="t" style="left:540.40px;top:6.29px;font-size:11.5px;line-height:12.85px;color:#111;letter-spacing:0.406px;-webkit-text-stroke:0.2px #111;">part.dxf</div><div class="a" style="left:0;top:23.7px;width:1083px;height:23px;background:#ececec"></div><div class="a" style="left:0;top:46.7px;width:23px;height:593px;background:#ececec"></div><svg style="left:0;top:0" width="1083" height="690"><rect x="31" y="40" width="1" height="6.7" fill="#5a5a5a"/><rect x="50" y="40" width="1" height="6.7" fill="#5a5a5a"/><rect x="70" y="40" width="1" height="6.7" fill="#5a5a5a"/><rect x="90" y="40" width="1" height="6.7" fill="#5a5a5a"/><rect x="109" y="40" width="1" height="6.7" fill="#5a5a5a"/><rect x="129" y="40" width="1" height="6.7" fill="#5a5a5a"/><rect x="149" y="40" width="1" height="6.7" fill="#5a5a5a"/><rect x="168" y="40" width="1" height="6.7" fill="#5a5a5a"/><rect x="188" y="40" width="1" height="6.7" fill="#5a5a5a"/><rect x="207" y="40" width="1" height="6.7" fill="#5a5a5a"/><rect x="227" y="40" width="1" height="6.7" fill="#5a5a5a"/><rect x="247" y="40" width="1" height="6.7" fill="#5a5a5a"/><rect x="266" y="40" width="1" height="6.7" fill="#5a5a5a"/><rect x="286" y="40" width="1" height="6.7" fill="#5a5a5a"/><rect x="306" y="40" width="1" height="6.7" fill="#5a5a5a"/><rect x="325" y="40" width="1" height="6.7" fill="#5a5a5a"/><rect x="345" y="40" width="1" height="6.7" fill="#5a5a5a"/><rect x="365" y="40" width="1" height="6.7" fill="#5a5a5a"/><rect x="384" y="40" width="1" height="6.7" fill="#5a5a5a"/><rect x="404" y="40" width="1" height="6.7" fill="#5a5a5a"/><rect x="424" y="40" width="1" height="6.7" fill="#5a5a5a"/><rect x="443" y="40" width="1" height="6.7" fill="#5a5a5a"/><rect x="463" y="40" width="1" height="6.7" fill="#5a5a5a"/><rect x="483" y="40" width="1" height="6.7" fill="#5a5a5a"/><rect x="502" y="40" width="1" height="6.7" fill="#5a5a5a"/><rect x="522" y="40" width="1" height="6.7" fill="#5a5a5a"/><rect x="542" y="40" width="1" height="6.7" fill="#5a5a5a"/><rect x="561" y="40" width="1" height="6.7" fill="#5a5a5a"/><rect x="581" y="40" width="1" height="6.7" fill="#5a5a5a"/><rect x="600" y="40" width="1" height="6.7" fill="#5a5a5a"/><rect x="620" y="40" width="1" height="6.7" fill="#5a5a5a"/><rect x="640" y="40" width="1" height="6.7" fill="#5a5a5a"/><rect x="659" y="40" width="1" height="6.7" fill="#5a5a5a"/><rect x="679" y="40" width="1" height="6.7" fill="#5a5a5a"/><rect x="699" y="40" width="1" height="6.7" fill="#5a5a5a"/><rect x="718" y="40" width="1" height="6.7" fill="#5a5a5a"/><rect x="738" y="40" width="1" height="6.7" fill="#5a5a5a"/><rect x="758" y="40" width="1" height="6.7" fill="#5a5a5a"/><rect x="777" y="40" width="1" height="6.7" fill="#5a5a5a"/><rect x="797" y="40" width="1" height="6.7" fill="#5a5a5a"/><rect x="817" y="40" width="1" height="6.7" fill="#5a5a5a"/><rect x="836" y="40" width="1" height="6.7" fill="#5a5a5a"/><rect x="856" y="40" width="1" height="6.7" fill="#5a5a5a"/><rect x="876" y="40" width="1" height="6.7" fill="#5a5a5a"/><rect x="895" y="40" width="1" height="6.7" fill="#5a5a5a"/><rect x="915" y="40" width="1" height="6.7" fill="#5a5a5a"/><rect x="934" y="40" width="1" height="6.7" fill="#5a5a5a"/><rect x="954" y="40" width="1" height="6.7" fill="#5a5a5a"/><rect x="974" y="40" width="1" height="6.7" fill="#5a5a5a"/><rect x="993" y="40" width="1" height="6.7" fill="#5a5a5a"/><rect x="1013" y="40" width="1" height="6.7" fill="#5a5a5a"/><rect x="1033" y="40" width="1" height="6.7" fill="#5a5a5a"/><rect x="1052" y="40" width="1" height="6.7" fill="#5a5a5a"/><rect x="16" y="605" width="7" height="1" fill="#5a5a5a"/><rect x="16" y="585" width="7" height="1" fill="#5a5a5a"/><rect x="16" y="566" width="7" height="1" fill="#5a5a5a"/><rect x="16" y="546" width="7" height="1" fill="#5a5a5a"/><rect x="16" y="526" width="7" height="1" fill="#5a5a5a"/><rect x="16" y="507" width="7" height="1" fill="#5a5a5a"/><rect x="16" y="487" width="7" height="1" fill="#5a5a5a"/><rect x="16" y="467" width="7" height="1" fill="#5a5a5a"/><rect x="16" y="448" width="7" height="1" fill="#5a5a5a"/><rect x="16" y="428" width="7" height="1" fill="#5a5a5a"/><rect x="16" y="409" width="7" height="1" fill="#5a5a5a"/><rect x="16" y="389" width="7" height="1" fill="#5a5a5a"/><rect x="16" y="369" width="7" height="1" fill="#5a5a5a"/><rect x="16" y="350" width="7" height="1" fill="#5a5a5a"/><rect x="16" y="330" width="7" height="1" fill="#5a5a5a"/><rect x="16" y="310" width="7" height="1" fill="#5a5a5a"/><rect x="16" y="291" width="7" height="1" fill="#5a5a5a"/><rect x="16" y="271" width="7" height="1" fill="#5a5a5a"/><rect x="16" y="252" width="7" height="1" fill="#5a5a5a"/><rect x="16" y="232" width="7" height="1" fill="#5a5a5a"/><rect x="16" y="212" width="7" height="1" fill="#5a5a5a"/><rect x="16" y="193" width="7" height="1" fill="#5a5a5a"/><rect x="16" y="173" width="7" height="1" fill="#5a5a5a"/><rect x="16" y="153" width="7" height="1" fill="#5a5a5a"/><rect x="16" y="134" width="7" height="1" fill="#5a5a5a"/><rect x="16" y="114" width="7" height="1" fill="#5a5a5a"/><rect x="16" y="95" width="7" height="1" fill="#5a5a5a"/><rect x="16" y="75" width="7" height="1" fill="#5a5a5a"/><rect x="16" y="55" width="7" height="1" fill="#5a5a5a"/><path d="M798.9 36.9 L810.9 36.9 L804.9 43 Z" fill="#000"/></svg><div class="t" style="left:28.54px;top:25.17px;font-size:9.2px;line-height:10.28px;color:#1a1a1a;letter-spacing:0.000px;-webkit-text-stroke:0.15px #1a1a1a;">8</div><div class="t" style="left:48.19px;top:25.17px;font-size:9.2px;line-height:10.28px;color:#1a1a1a;letter-spacing:0.000px;-webkit-text-stroke:0.15px #1a1a1a;">9</div><div class="t" style="left:65.18px;top:25.17px;font-size:9.2px;line-height:10.28px;color:#1a1a1a;letter-spacing:0.100px;-webkit-text-stroke:0.15px #1a1a1a;">10</div><div class="t" style="left:85.18px;top:25.17px;font-size:9.2px;line-height:10.28px;color:#1a1a1a;letter-spacing:0.100px;-webkit-text-stroke:0.15px #1a1a1a;">11</div><div class="t" style="left:104.48px;top:25.17px;font-size:9.2px;line-height:10.28px;color:#1a1a1a;letter-spacing:0.100px;-webkit-text-stroke:0.15px #1a1a1a;">12</div><div class="t" style="left:124.13px;top:25.17px;font-size:9.2px;line-height:10.28px;color:#1a1a1a;letter-spacing:0.100px;-webkit-text-stroke:0.15px #1a1a1a;">13</div><div class="t" style="left:143.78px;top:25.17px;font-size:9.2px;line-height:10.28px;color:#1a1a1a;letter-spacing:0.100px;-webkit-text-stroke:0.15px #1a1a1a;">14</div><div class="t" style="left:163.43px;top:25.17px;font-size:9.2px;line-height:10.28px;color:#1a1a1a;letter-spacing:0.100px;-webkit-text-stroke:0.15px #1a1a1a;">15</div><div class="t" style="left:183.08px;top:25.17px;font-size:9.2px;line-height:10.28px;color:#1a1a1a;letter-spacing:0.100px;-webkit-text-stroke:0.15px #1a1a1a;">16</div><div class="t" style="left:202.73px;top:25.17px;font-size:9.2px;line-height:10.28px;color:#1a1a1a;letter-spacing:0.100px;-webkit-text-stroke:0.15px #1a1a1a;">17</div><div class="t" style="left:222.38px;top:25.17px;font-size:9.2px;line-height:10.28px;color:#1a1a1a;letter-spacing:0.100px;-webkit-text-stroke:0.15px #1a1a1a;">18</div><div class="t" style="left:242.03px;top:25.17px;font-size:9.2px;line-height:10.28px;color:#1a1a1a;letter-spacing:0.100px;-webkit-text-stroke:0.15px #1a1a1a;">19</div><div class="t" style="left:261.68px;top:25.17px;font-size:9.2px;line-height:10.28px;color:#1a1a1a;letter-spacing:0.100px;-webkit-text-stroke:0.15px #1a1a1a;">20</div><div class="t" style="left:281.33px;top:25.17px;font-size:9.2px;line-height:10.28px;color:#1a1a1a;letter-spacing:0.100px;-webkit-text-stroke:0.15px #1a1a1a;">21</div><div class="t" style="left:300.98px;top:25.17px;font-size:9.2px;line-height:10.28px;color:#1a1a1a;letter-spacing:0.100px;-webkit-text-stroke:0.15px #1a1a1a;">22</div><div class="t" style="left:320.63px;top:25.17px;font-size:9.2px;line-height:10.28px;color:#1a1a1a;letter-spacing:0.100px;-webkit-text-stroke:0.15px #1a1a1a;">23</div><div class="t" style="left:340.28px;top:25.17px;font-size:9.2px;line-height:10.28px;color:#1a1a1a;letter-spacing:0.100px;-webkit-text-stroke:0.15px #1a1a1a;">24</div><div class="t" style="left:359.93px;top:25.17px;font-size:9.2px;line-height:10.28px;color:#1a1a1a;letter-spacing:0.100px;-webkit-text-stroke:0.15px #1a1a1a;">25</div><div class="t" style="left:379.58px;top:25.17px;font-size:9.2px;line-height:10.28px;color:#1a1a1a;letter-spacing:0.100px;-webkit-text-stroke:0.15px #1a1a1a;">26</div><div class="t" style="left:399.23px;top:25.17px;font-size:9.2px;line-height:10.28px;color:#1a1a1a;letter-spacing:0.100px;-webkit-text-stroke:0.15px #1a1a1a;">27</div><div class="t" style="left:418.88px;top:25.17px;font-size:9.2px;line-height:10.28px;color:#1a1a1a;letter-spacing:0.100px;-webkit-text-stroke:0.15px #1a1a1a;">28</div><div class="t" style="left:438.53px;top:25.17px;font-size:9.2px;line-height:10.28px;color:#1a1a1a;letter-spacing:0.100px;-webkit-text-stroke:0.15px #1a1a1a;">29</div><div class="t" style="left:458.18px;top:25.17px;font-size:9.2px;line-height:10.28px;color:#1a1a1a;letter-spacing:0.100px;-webkit-text-stroke:0.15px #1a1a1a;">30</div><div class="t" style="left:477.83px;top:25.17px;font-size:9.2px;line-height:10.28px;color:#1a1a1a;letter-spacing:0.100px;-webkit-text-stroke:0.15px #1a1a1a;">31</div><div class="t" style="left:497.48px;top:25.17px;font-size:9.2px;line-height:10.28px;color:#1a1a1a;letter-spacing:0.100px;-webkit-text-stroke:0.15px #1a1a1a;">32</div><div class="t" style="left:517.13px;top:25.17px;font-size:9.2px;line-height:10.28px;color:#1a1a1a;letter-spacing:0.100px;-webkit-text-stroke:0.15px #1a1a1a;">33</div><div class="t" style="left:536.78px;top:25.17px;font-size:9.2px;line-height:10.28px;color:#1a1a1a;letter-spacing:0.100px;-webkit-text-stroke:0.15px #1a1a1a;">34</div><div class="t" style="left:556.43px;top:25.17px;font-size:9.2px;line-height:10.28px;color:#1a1a1a;letter-spacing:0.100px;-webkit-text-stroke:0.15px #1a1a1a;">35</div><div class="t" style="left:576.08px;top:25.17px;font-size:9.2px;line-height:10.28px;color:#1a1a1a;letter-spacing:0.100px;-webkit-text-stroke:0.15px #1a1a1a;">36</div><div class="t" style="left:595.73px;top:25.17px;font-size:9.2px;line-height:10.28px;color:#1a1a1a;letter-spacing:0.100px;-webkit-text-stroke:0.15px #1a1a1a;">37</div><div class="t" style="left:615.38px;top:25.17px;font-size:9.2px;line-height:10.28px;color:#1a1a1a;letter-spacing:0.100px;-webkit-text-stroke:0.15px #1a1a1a;">38</div><div class="t" style="left:635.03px;top:25.17px;font-size:9.2px;line-height:10.28px;color:#1a1a1a;letter-spacing:0.100px;-webkit-text-stroke:0.15px #1a1a1a;">39</div><div class="t" style="left:654.68px;top:25.17px;font-size:9.2px;line-height:10.28px;color:#1a1a1a;letter-spacing:0.100px;-webkit-text-stroke:0.15px #1a1a1a;">40</div><div class="t" style="left:674.33px;top:25.17px;font-size:9.2px;line-height:10.28px;color:#1a1a1a;letter-spacing:0.100px;-webkit-text-stroke:0.15px #1a1a1a;">41</div><div class="t" style="left:693.98px;top:25.17px;font-size:9.2px;line-height:10.28px;color:#1a1a1a;letter-spacing:0.100px;-webkit-text-stroke:0.15px #1a1a1a;">42</div><div class="t" style="left:713.63px;top:25.17px;font-size:9.2px;line-height:10.28px;color:#1a1a1a;letter-spacing:0.100px;-webkit-text-stroke:0.15px #1a1a1a;">43</div><div class="t" style="left:733.28px;top:25.17px;font-size:9.2px;line-height:10.28px;color:#1a1a1a;letter-spacing:0.100px;-webkit-text-stroke:0.15px #1a1a1a;">44</div><div class="t" style="left:752.93px;top:25.17px;font-size:9.2px;line-height:10.28px;color:#1a1a1a;letter-spacing:0.100px;-webkit-text-stroke:0.15px #1a1a1a;">45</div><div class="t" style="left:772.58px;top:25.17px;font-size:9.2px;line-height:10.28px;color:#1a1a1a;letter-spacing:0.100px;-webkit-text-stroke:0.15px #1a1a1a;">46</div><div class="t" style="left:792.23px;top:25.17px;font-size:9.2px;line-height:10.28px;color:#1a1a1a;letter-spacing:0.100px;-webkit-text-stroke:0.15px #1a1a1a;">47</div><div class="t" style="left:811.88px;top:25.17px;font-size:9.2px;line-height:10.28px;color:#1a1a1a;letter-spacing:0.100px;-webkit-text-stroke:0.15px #1a1a1a;">48</div><div class="t" style="left:831.53px;top:25.17px;font-size:9.2px;line-height:10.28px;color:#1a1a1a;letter-spacing:0.100px;-webkit-text-stroke:0.15px #1a1a1a;">49</div><div class="t" style="left:851.18px;top:25.17px;font-size:9.2px;line-height:10.28px;color:#1a1a1a;letter-spacing:0.100px;-webkit-text-stroke:0.15px #1a1a1a;">50</div><div class="t" style="left:870.83px;top:25.17px;font-size:9.2px;line-height:10.28px;color:#1a1a1a;letter-spacing:0.100px;-webkit-text-stroke:0.15px #1a1a1a;">51</div><div class="t" style="left:890.48px;top:25.17px;font-size:9.2px;line-height:10.28px;color:#1a1a1a;letter-spacing:0.100px;-webkit-text-stroke:0.15px #1a1a1a;">52</div><div class="t" style="left:910.13px;top:25.17px;font-size:9.2px;line-height:10.28px;color:#1a1a1a;letter-spacing:0.100px;-webkit-text-stroke:0.15px #1a1a1a;">53</div><div class="t" style="left:929.78px;top:25.17px;font-size:9.2px;line-height:10.28px;color:#1a1a1a;letter-spacing:0.100px;-webkit-text-stroke:0.15px #1a1a1a;">54</div><div class="t" style="left:949.43px;top:25.17px;font-size:9.2px;line-height:10.28px;color:#1a1a1a;letter-spacing:0.100px;-webkit-text-stroke:0.15px #1a1a1a;">55</div><div class="t" style="left:969.08px;top:25.17px;font-size:9.2px;line-height:10.28px;color:#1a1a1a;letter-spacing:0.100px;-webkit-text-stroke:0.15px #1a1a1a;">56</div><div class="t" style="left:988.73px;top:25.17px;font-size:9.2px;line-height:10.28px;color:#1a1a1a;letter-spacing:0.100px;-webkit-text-stroke:0.15px #1a1a1a;">57</div><div class="t" style="left:1008.38px;top:25.17px;font-size:9.2px;line-height:10.28px;color:#1a1a1a;letter-spacing:0.100px;-webkit-text-stroke:0.15px #1a1a1a;">58</div><div class="t" style="left:1028.03px;top:25.17px;font-size:9.2px;line-height:10.28px;color:#1a1a1a;letter-spacing:0.100px;-webkit-text-stroke:0.15px #1a1a1a;">59</div><div class="t" style="left:1047.68px;top:25.17px;font-size:9.2px;line-height:10.28px;color:#1a1a1a;letter-spacing:0.100px;-webkit-text-stroke:0.15px #1a1a1a;">60</div><div class="a" style="left:0;top:46.7px;width:23px;height:577px;overflow:hidden"><div class="t" style="left:0.78px;top:573.31px;width:10.43px;height:10px;font-size:9.2px;line-height:10px;color:#1a1a1a;-webkit-text-stroke:0.15px #1a1a1a;letter-spacing:0.10px;transform:rotate(-90deg);transform-origin:50% 50%;text-align:center">18</div><div class="t" style="left:0.78px;top:553.68px;width:10.43px;height:10px;font-size:9.2px;line-height:10px;color:#1a1a1a;-webkit-text-stroke:0.15px #1a1a1a;letter-spacing:0.10px;transform:rotate(-90deg);transform-origin:50% 50%;text-align:center">19</div><div class="t" style="left:0.78px;top:534.05px;width:10.43px;height:10px;font-size:9.2px;line-height:10px;color:#1a1a1a;-webkit-text-stroke:0.15px #1a1a1a;letter-spacing:0.10px;transform:rotate(-90deg);transform-origin:50% 50%;text-align:center">20</div><div class="t" style="left:0.78px;top:514.42px;width:10.43px;height:10px;font-size:9.2px;line-height:10px;color:#1a1a1a;-webkit-text-stroke:0.15px #1a1a1a;letter-spacing:0.10px;transform:rotate(-90deg);transform-origin:50% 50%;text-align:center">21</div><div class="t" style="left:0.78px;top:494.79px;width:10.43px;height:10px;font-size:9.2px;line-height:10px;color:#1a1a1a;-webkit-text-stroke:0.15px #1a1a1a;letter-spacing:0.10px;transform:rotate(-90deg);transform-origin:50% 50%;text-align:center">22</div><div class="t" style="left:0.78px;top:475.16px;width:10.43px;height:10px;font-size:9.2px;line-height:10px;color:#1a1a1a;-webkit-text-stroke:0.15px #1a1a1a;letter-spacing:0.10px;transform:rotate(-90deg);transform-origin:50% 50%;text-align:center">23</div><div class="t" style="left:0.78px;top:455.53px;width:10.43px;height:10px;font-size:9.2px;line-height:10px;color:#1a1a1a;-webkit-text-stroke:0.15px #1a1a1a;letter-spacing:0.10px;transform:rotate(-90deg);transform-origin:50% 50%;text-align:center">24</div><div class="t" style="left:0.78px;top:435.90px;width:10.43px;height:10px;font-size:9.2px;line-height:10px;color:#1a1a1a;-webkit-text-stroke:0.15px #1a1a1a;letter-spacing:0.10px;transform:rotate(-90deg);transform-origin:50% 50%;text-align:center">25</div><div class="t" style="left:0.78px;top:416.27px;width:10.43px;height:10px;font-size:9.2px;line-height:10px;color:#1a1a1a;-webkit-text-stroke:0.15px #1a1a1a;letter-spacing:0.10px;transform:rotate(-90deg);transform-origin:50% 50%;text-align:center">26</div><div class="t" style="left:0.78px;top:396.64px;width:10.43px;height:10px;font-size:9.2px;line-height:10px;color:#1a1a1a;-webkit-text-stroke:0.15px #1a1a1a;letter-spacing:0.10px;transform:rotate(-90deg);transform-origin:50% 50%;text-align:center">27</div><div class="t" style="left:0.78px;top:377.01px;width:10.43px;height:10px;font-size:9.2px;line-height:10px;color:#1a1a1a;-webkit-text-stroke:0.15px #1a1a1a;letter-spacing:0.10px;transform:rotate(-90deg);transform-origin:50% 50%;text-align:center">28</div><div class="t" style="left:0.78px;top:357.38px;width:10.43px;height:10px;font-size:9.2px;line-height:10px;color:#1a1a1a;-webkit-text-stroke:0.15px #1a1a1a;letter-spacing:0.10px;transform:rotate(-90deg);transform-origin:50% 50%;text-align:center">29</div><div class="t" style="left:0.78px;top:337.75px;width:10.43px;height:10px;font-size:9.2px;line-height:10px;color:#1a1a1a;-webkit-text-stroke:0.15px #1a1a1a;letter-spacing:0.10px;transform:rotate(-90deg);transform-origin:50% 50%;text-align:center">30</div><div class="t" style="left:0.78px;top:318.12px;width:10.43px;height:10px;font-size:9.2px;line-height:10px;color:#1a1a1a;-webkit-text-stroke:0.15px #1a1a1a;letter-spacing:0.10px;transform:rotate(-90deg);transform-origin:50% 50%;text-align:center">31</div><div class="t" style="left:0.78px;top:298.49px;width:10.43px;height:10px;font-size:9.2px;line-height:10px;color:#1a1a1a;-webkit-text-stroke:0.15px #1a1a1a;letter-spacing:0.10px;transform:rotate(-90deg);transform-origin:50% 50%;text-align:center">32</div><div class="t" style="left:0.78px;top:278.86px;width:10.43px;height:10px;font-size:9.2px;line-height:10px;color:#1a1a1a;-webkit-text-stroke:0.15px #1a1a1a;letter-spacing:0.10px;transform:rotate(-90deg);transform-origin:50% 50%;text-align:center">33</div><div class="t" style="left:0.78px;top:259.23px;width:10.43px;height:10px;font-size:9.2px;line-height:10px;color:#1a1a1a;-webkit-text-stroke:0.15px #1a1a1a;letter-spacing:0.10px;transform:rotate(-90deg);transform-origin:50% 50%;text-align:center">34</div><div class="t" style="left:0.78px;top:239.60px;width:10.43px;height:10px;font-size:9.2px;line-height:10px;color:#1a1a1a;-webkit-text-stroke:0.15px #1a1a1a;letter-spacing:0.10px;transform:rotate(-90deg);transform-origin:50% 50%;text-align:center">35</div><div class="t" style="left:0.78px;top:219.97px;width:10.43px;height:10px;font-size:9.2px;line-height:10px;color:#1a1a1a;-webkit-text-stroke:0.15px #1a1a1a;letter-spacing:0.10px;transform:rotate(-90deg);transform-origin:50% 50%;text-align:center">36</div><div class="t" style="left:0.78px;top:200.34px;width:10.43px;height:10px;font-size:9.2px;line-height:10px;color:#1a1a1a;-webkit-text-stroke:0.15px #1a1a1a;letter-spacing:0.10px;transform:rotate(-90deg);transform-origin:50% 50%;text-align:center">37</div><div class="t" style="left:0.78px;top:180.71px;width:10.43px;height:10px;font-size:9.2px;line-height:10px;color:#1a1a1a;-webkit-text-stroke:0.15px #1a1a1a;letter-spacing:0.10px;transform:rotate(-90deg);transform-origin:50% 50%;text-align:center">38</div><div class="t" style="left:0.78px;top:161.08px;width:10.43px;height:10px;font-size:9.2px;line-height:10px;color:#1a1a1a;-webkit-text-stroke:0.15px #1a1a1a;letter-spacing:0.10px;transform:rotate(-90deg);transform-origin:50% 50%;text-align:center">39</div><div class="t" style="left:0.78px;top:141.45px;width:10.43px;height:10px;font-size:9.2px;line-height:10px;color:#1a1a1a;-webkit-text-stroke:0.15px #1a1a1a;letter-spacing:0.10px;transform:rotate(-90deg);transform-origin:50% 50%;text-align:center">40</div><div class="t" style="left:0.78px;top:121.82px;width:10.43px;height:10px;font-size:9.2px;line-height:10px;color:#1a1a1a;-webkit-text-stroke:0.15px #1a1a1a;letter-spacing:0.10px;transform:rotate(-90deg);transform-origin:50% 50%;text-align:center">41</div><div class="t" style="left:0.78px;top:102.19px;width:10.43px;height:10px;font-size:9.2px;line-height:10px;color:#1a1a1a;-webkit-text-stroke:0.15px #1a1a1a;letter-spacing:0.10px;transform:rotate(-90deg);transform-origin:50% 50%;text-align:center">42</div><div class="t" style="left:0.78px;top:82.56px;width:10.43px;height:10px;font-size:9.2px;line-height:10px;color:#1a1a1a;-webkit-text-stroke:0.15px #1a1a1a;letter-spacing:0.10px;transform:rotate(-90deg);transform-origin:50% 50%;text-align:center">43</div><div class="t" style="left:0.78px;top:62.93px;width:10.43px;height:10px;font-size:9.2px;line-height:10px;color:#1a1a1a;-webkit-text-stroke:0.15px #1a1a1a;letter-spacing:0.10px;transform:rotate(-90deg);transform-origin:50% 50%;text-align:center">44</div><div class="t" style="left:0.78px;top:43.30px;width:10.43px;height:10px;font-size:9.2px;line-height:10px;color:#1a1a1a;-webkit-text-stroke:0.15px #1a1a1a;letter-spacing:0.10px;transform:rotate(-90deg);transform-origin:50% 50%;text-align:center">45</div><div class="t" style="left:0.78px;top:23.67px;width:10.43px;height:10px;font-size:9.2px;line-height:10px;color:#1a1a1a;-webkit-text-stroke:0.15px #1a1a1a;letter-spacing:0.10px;transform:rotate(-90deg);transform-origin:50% 50%;text-align:center">46</div><div class="t" style="left:0.78px;top:4.04px;width:10.43px;height:10px;font-size:9.2px;line-height:10px;color:#1a1a1a;-webkit-text-stroke:0.15px #1a1a1a;letter-spacing:0.10px;transform:rotate(-90deg);transform-origin:50% 50%;text-align:center">47</div></div><div id="canvas" style="left:23px;top:47.0px;width:1043px;height:577.0px"><svg style="left:0;top:0" width="1043" height="577.0" viewBox="0 0 1043 577.0"><rect x="46" y="0" width="2" height="577.0" fill="#141414"/><rect x="243" y="0" width="2" height="577.0" fill="#141414"/><rect x="439" y="0" width="2" height="577.0" fill="#141414"/><rect x="636" y="0" width="2" height="577.0" fill="#141414"/><rect x="832" y="0" width="2" height="577.0" fill="#141414"/><rect x="1029" y="0" width="2" height="577.0" fill="#141414"/><rect x="0" y="538" width="1043" height="2" fill="#151515"/><rect x="0" y="341" width="1043" height="2" fill="#151515"/><rect x="0" y="145" width="1043" height="2" fill="#151515"/><path d="M8 558h1v1h-1zM8 539h1v1h-1zM8 519h1v1h-1zM8 499h1v1h-1zM8 480h1v1h-1zM8 460h1v1h-1zM8 441h1v1h-1zM8 421h1v1h-1zM8 401h1v1h-1zM8 382h1v1h-1zM8 362h1v1h-1zM8 342h1v1h-1zM8 323h1v1h-1zM8 303h1v1h-1zM8 284h1v1h-1zM8 264h1v1h-1zM8 244h1v1h-1zM8 225h1v1h-1zM8 205h1v1h-1zM8 185h1v1h-1zM8 166h1v1h-1zM8 146h1v1h-1zM8 127h1v1h-1zM8 107h1v1h-1zM8 87h1v1h-1zM8 68h1v1h-1zM8 48h1v1h-1zM8 28h1v1h-1zM8 9h1v1h-1zM28 558h1v1h-1zM28 539h1v1h-1zM28 519h1v1h-1zM28 499h1v1h-1zM28 480h1v1h-1zM28 460h1v1h-1zM28 441h1v1h-1zM28 421h1v1h-1zM28 401h1v1h-1zM28 382h1v1h-1zM28 362h1v1h-1zM28 342h1v1h-1zM28 323h1v1h-1zM28 303h1v1h-1zM28 284h1v1h-1zM28 264h1v1h-1zM28 244h1v1h-1zM28 225h1v1h-1zM28 205h1v1h-1zM28 185h1v1h-1zM28 166h1v1h-1zM28 146h1v1h-1zM28 127h1v1h-1zM28 107h1v1h-1zM28 87h1v1h-1zM28 68h1v1h-1zM28 48h1v1h-1zM28 28h1v1h-1zM28 9h1v1h-1zM47 558h1v1h-1zM47 539h1v1h-1zM47 519h1v1h-1zM47 499h1v1h-1zM47 480h1v1h-1zM47 460h1v1h-1zM47 441h1v1h-1zM47 421h1v1h-1zM47 401h1v1h-1zM47 382h1v1h-1zM47 362h1v1h-1zM47 342h1v1h-1zM47 323h1v1h-1zM47 303h1v1h-1zM47 284h1v1h-1zM47 264h1v1h-1zM47 244h1v1h-1zM47 225h1v1h-1zM47 205h1v1h-1zM47 185h1v1h-1zM47 166h1v1h-1zM47 146h1v1h-1zM47 127h1v1h-1zM47 107h1v1h-1zM47 87h1v1h-1zM47 68h1v1h-1zM47 48h1v1h-1zM47 28h1v1h-1zM47 9h1v1h-1zM67 558h1v1h-1zM67 539h1v1h-1zM67 519h1v1h-1zM67 499h1v1h-1zM67 480h1v1h-1zM67 460h1v1h-1zM67 441h1v1h-1zM67 421h1v1h-1zM67 401h1v1h-1zM67 382h1v1h-1zM67 362h1v1h-1zM67 342h1v1h-1zM67 323h1v1h-1zM67 303h1v1h-1zM67 284h1v1h-1zM67 264h1v1h-1zM67 244h1v1h-1zM67 225h1v1h-1zM67 205h1v1h-1zM67 185h1v1h-1zM67 166h1v1h-1zM67 146h1v1h-1zM67 127h1v1h-1zM67 107h1v1h-1zM67 87h1v1h-1zM67 68h1v1h-1zM67 48h1v1h-1zM67 28h1v1h-1zM67 9h1v1h-1zM87 558h1v1h-1zM87 539h1v1h-1zM87 519h1v1h-1zM87 499h1v1h-1zM87 480h1v1h-1zM87 460h1v1h-1zM87 441h1v1h-1zM87 421h1v1h-1zM87 401h1v1h-1zM87 382h1v1h-1zM87 362h1v1h-1zM87 342h1v1h-1zM87 323h1v1h-1zM87 303h1v1h-1zM87 284h1v1h-1zM87 264h1v1h-1zM87 244h1v1h-1zM87 225h1v1h-1zM87 205h1v1h-1zM87 185h1v1h-1zM87 166h1v1h-1zM87 146h1v1h-1zM87 127h1v1h-1zM87 107h1v1h-1zM87 87h1v1h-1zM87 68h1v1h-1zM87 48h1v1h-1zM87 28h1v1h-1zM87 9h1v1h-1zM106 558h1v1h-1zM106 539h1v1h-1zM106 519h1v1h-1zM106 499h1v1h-1zM106 480h1v1h-1zM106 460h1v1h-1zM106 441h1v1h-1zM106 421h1v1h-1zM106 401h1v1h-1zM106 382h1v1h-1zM106 362h1v1h-1zM106 342h1v1h-1zM106 323h1v1h-1zM106 303h1v1h-1zM106 284h1v1h-1zM106 264h1v1h-1zM106 244h1v1h-1zM106 225h1v1h-1zM106 205h1v1h-1zM106 185h1v1h-1zM106 166h1v1h-1zM106 146h1v1h-1zM106 127h1v1h-1zM106 107h1v1h-1zM106 87h1v1h-1zM106 68h1v1h-1zM106 48h1v1h-1zM106 28h1v1h-1zM106 9h1v1h-1zM126 558h1v1h-1zM126 539h1v1h-1zM126 519h1v1h-1zM126 499h1v1h-1zM126 480h1v1h-1zM126 460h1v1h-1zM126 441h1v1h-1zM126 421h1v1h-1zM126 401h1v1h-1zM126 382h1v1h-1zM126 362h1v1h-1zM126 342h1v1h-1zM126 323h1v1h-1zM126 303h1v1h-1zM126 284h1v1h-1zM126 264h1v1h-1zM126 244h1v1h-1zM126 225h1v1h-1zM126 205h1v1h-1zM126 185h1v1h-1zM126 166h1v1h-1zM126 146h1v1h-1zM126 127h1v1h-1zM126 107h1v1h-1zM126 87h1v1h-1zM126 68h1v1h-1zM126 48h1v1h-1zM126 28h1v1h-1zM126 9h1v1h-1zM146 558h1v1h-1zM146 539h1v1h-1zM146 519h1v1h-1zM146 499h1v1h-1zM146 480h1v1h-1zM146 460h1v1h-1zM146 441h1v1h-1zM146 421h1v1h-1zM146 401h1v1h-1zM146 382h1v1h-1zM146 362h1v1h-1zM146 342h1v1h-1zM146 323h1v1h-1zM146 303h1v1h-1zM146 284h1v1h-1zM146 264h1v1h-1zM146 244h1v1h-1zM146 225h1v1h-1zM146 205h1v1h-1zM146 185h1v1h-1zM146 166h1v1h-1zM146 146h1v1h-1zM146 127h1v1h-1zM146 107h1v1h-1zM146 87h1v1h-1zM146 68h1v1h-1zM146 48h1v1h-1zM146 28h1v1h-1zM146 9h1v1h-1zM165 558h1v1h-1zM165 539h1v1h-1zM165 519h1v1h-1zM165 499h1v1h-1zM165 480h1v1h-1zM165 460h1v1h-1zM165 441h1v1h-1zM165 421h1v1h-1zM165 401h1v1h-1zM165 382h1v1h-1zM165 362h1v1h-1zM165 342h1v1h-1zM165 323h1v1h-1zM165 303h1v1h-1zM165 284h1v1h-1zM165 264h1v1h-1zM165 244h1v1h-1zM165 225h1v1h-1zM165 205h1v1h-1zM165 185h1v1h-1zM165 166h1v1h-1zM165 146h1v1h-1zM165 127h1v1h-1zM165 107h1v1h-1zM165 87h1v1h-1zM165 68h1v1h-1zM165 48h1v1h-1zM165 28h1v1h-1zM165 9h1v1h-1zM185 558h1v1h-1zM185 539h1v1h-1zM185 519h1v1h-1zM185 499h1v1h-1zM185 480h1v1h-1zM185 460h1v1h-1zM185 441h1v1h-1zM185 421h1v1h-1zM185 401h1v1h-1zM185 382h1v1h-1zM185 362h1v1h-1zM185 342h1v1h-1zM185 323h1v1h-1zM185 303h1v1h-1zM185 284h1v1h-1zM185 264h1v1h-1zM185 244h1v1h-1zM185 225h1v1h-1zM185 205h1v1h-1zM185 185h1v1h-1zM185 166h1v1h-1zM185 146h1v1h-1zM185 127h1v1h-1zM185 107h1v1h-1zM185 87h1v1h-1zM185 68h1v1h-1zM185 48h1v1h-1zM185 28h1v1h-1zM185 9h1v1h-1zM205 558h1v1h-1zM205 539h1v1h-1zM205 519h1v1h-1zM205 499h1v1h-1zM205 480h1v1h-1zM205 460h1v1h-1zM205 441h1v1h-1zM205 421h1v1h-1zM205 401h1v1h-1zM205 382h1v1h-1zM205 362h1v1h-1zM205 342h1v1h-1zM205 323h1v1h-1zM205 303h1v1h-1zM205 284h1v1h-1zM205 264h1v1h-1zM205 244h1v1h-1zM205 225h1v1h-1zM205 205h1v1h-1zM205 185h1v1h-1zM205 166h1v1h-1zM205 146h1v1h-1zM205 127h1v1h-1zM205 107h1v1h-1zM205 87h1v1h-1zM205 68h1v1h-1zM205 48h1v1h-1zM205 28h1v1h-1zM205 9h1v1h-1zM224 558h1v1h-1zM224 539h1v1h-1zM224 519h1v1h-1zM224 499h1v1h-1zM224 480h1v1h-1zM224 460h1v1h-1zM224 441h1v1h-1zM224 421h1v1h-1zM224 401h1v1h-1zM224 382h1v1h-1zM224 362h1v1h-1zM224 342h1v1h-1zM224 323h1v1h-1zM224 303h1v1h-1zM224 284h1v1h-1zM224 264h1v1h-1zM224 244h1v1h-1zM224 225h1v1h-1zM224 205h1v1h-1zM224 185h1v1h-1zM224 166h1v1h-1zM224 146h1v1h-1zM224 127h1v1h-1zM224 107h1v1h-1zM224 87h1v1h-1zM224 68h1v1h-1zM224 48h1v1h-1zM224 28h1v1h-1zM224 9h1v1h-1zM244 558h1v1h-1zM244 539h1v1h-1zM244 519h1v1h-1zM244 499h1v1h-1zM244 480h1v1h-1zM244 460h1v1h-1zM244 441h1v1h-1zM244 421h1v1h-1zM244 401h1v1h-1zM244 382h1v1h-1zM244 362h1v1h-1zM244 342h1v1h-1zM244 323h1v1h-1zM244 303h1v1h-1zM244 284h1v1h-1zM244 264h1v1h-1zM244 244h1v1h-1zM244 225h1v1h-1zM244 205h1v1h-1zM244 185h1v1h-1zM244 166h1v1h-1zM244 146h1v1h-1zM244 127h1v1h-1zM244 107h1v1h-1zM244 87h1v1h-1zM244 68h1v1h-1zM244 48h1v1h-1zM244 28h1v1h-1zM244 9h1v1h-1zM264 558h1v1h-1zM264 539h1v1h-1zM264 519h1v1h-1zM264 499h1v1h-1zM264 480h1v1h-1zM264 460h1v1h-1zM264 441h1v1h-1zM264 421h1v1h-1zM264 401h1v1h-1zM264 382h1v1h-1zM264 362h1v1h-1zM264 342h1v1h-1zM264 323h1v1h-1zM264 303h1v1h-1zM264 284h1v1h-1zM264 264h1v1h-1zM264 244h1v1h-1zM264 225h1v1h-1zM264 205h1v1h-1zM264 185h1v1h-1zM264 166h1v1h-1zM264 146h1v1h-1zM264 127h1v1h-1zM264 107h1v1h-1zM264 87h1v1h-1zM264 68h1v1h-1zM264 48h1v1h-1zM264 28h1v1h-1zM264 9h1v1h-1zM283 558h1v1h-1zM283 539h1v1h-1zM283 519h1v1h-1zM283 499h1v1h-1zM283 480h1v1h-1zM283 460h1v1h-1zM283 441h1v1h-1zM283 421h1v1h-1zM283 401h1v1h-1zM283 382h1v1h-1zM283 362h1v1h-1zM283 342h1v1h-1zM283 323h1v1h-1zM283 303h1v1h-1zM283 284h1v1h-1zM283 264h1v1h-1zM283 244h1v1h-1zM283 225h1v1h-1zM283 205h1v1h-1zM283 185h1v1h-1zM283 166h1v1h-1zM283 146h1v1h-1zM283 127h1v1h-1zM283 107h1v1h-1zM283 87h1v1h-1zM283 68h1v1h-1zM283 48h1v1h-1zM283 28h1v1h-1zM283 9h1v1h-1zM303 558h1v1h-1zM303 539h1v1h-1zM303 519h1v1h-1zM303 499h1v1h-1zM303 480h1v1h-1zM303 460h1v1h-1zM303 441h1v1h-1zM303 421h1v1h-1zM303 401h1v1h-1zM303 382h1v1h-1zM303 362h1v1h-1zM303 342h1v1h-1zM303 323h1v1h-1zM303 303h1v1h-1zM303 284h1v1h-1zM303 264h1v1h-1zM303 244h1v1h-1zM303 225h1v1h-1zM303 205h1v1h-1zM303 185h1v1h-1zM303 166h1v1h-1zM303 146h1v1h-1zM303 127h1v1h-1zM303 107h1v1h-1zM303 87h1v1h-1zM303 68h1v1h-1zM303 48h1v1h-1zM303 28h1v1h-1zM303 9h1v1h-1zM323 558h1v1h-1zM323 539h1v1h-1zM323 519h1v1h-1zM323 499h1v1h-1zM323 480h1v1h-1zM323 460h1v1h-1zM323 441h1v1h-1zM323 421h1v1h-1zM323 401h1v1h-1zM323 382h1v1h-1zM323 362h1v1h-1zM323 342h1v1h-1zM323 323h1v1h-1zM323 303h1v1h-1zM323 284h1v1h-1zM323 264h1v1h-1zM323 244h1v1h-1zM323 225h1v1h-1zM323 205h1v1h-1zM323 185h1v1h-1zM323 166h1v1h-1zM323 146h1v1h-1zM323 127h1v1h-1zM323 107h1v1h-1zM323 87h1v1h-1zM323 68h1v1h-1zM323 48h1v1h-1zM323 28h1v1h-1zM323 9h1v1h-1zM342 558h1v1h-1zM342 539h1v1h-1zM342 519h1v1h-1zM342 499h1v1h-1zM342 480h1v1h-1zM342 460h1v1h-1zM342 441h1v1h-1zM342 421h1v1h-1zM342 401h1v1h-1zM342 382h1v1h-1zM342 362h1v1h-1zM342 342h1v1h-1zM342 323h1v1h-1zM342 303h1v1h-1zM342 284h1v1h-1zM342 264h1v1h-1zM342 244h1v1h-1zM342 225h1v1h-1zM342 205h1v1h-1zM342 185h1v1h-1zM342 166h1v1h-1zM342 146h1v1h-1zM342 127h1v1h-1zM342 107h1v1h-1zM342 87h1v1h-1zM342 68h1v1h-1zM342 48h1v1h-1zM342 28h1v1h-1zM342 9h1v1h-1zM362 558h1v1h-1zM362 539h1v1h-1zM362 519h1v1h-1zM362 499h1v1h-1zM362 480h1v1h-1zM362 460h1v1h-1zM362 441h1v1h-1zM362 421h1v1h-1zM362 401h1v1h-1zM362 382h1v1h-1zM362 362h1v1h-1zM362 342h1v1h-1zM362 323h1v1h-1zM362 303h1v1h-1zM362 284h1v1h-1zM362 264h1v1h-1zM362 244h1v1h-1zM362 225h1v1h-1zM362 205h1v1h-1zM362 185h1v1h-1zM362 166h1v1h-1zM362 146h1v1h-1zM362 127h1v1h-1zM362 107h1v1h-1zM362 87h1v1h-1zM362 68h1v1h-1zM362 48h1v1h-1zM362 28h1v1h-1zM362 9h1v1h-1zM381 558h1v1h-1zM381 539h1v1h-1zM381 519h1v1h-1zM381 499h1v1h-1zM381 480h1v1h-1zM381 460h1v1h-1zM381 441h1v1h-1zM381 421h1v1h-1zM381 401h1v1h-1zM381 382h1v1h-1zM381 362h1v1h-1zM381 342h1v1h-1zM381 323h1v1h-1zM381 303h1v1h-1zM381 284h1v1h-1zM381 264h1v1h-1zM381 244h1v1h-1zM381 225h1v1h-1zM381 205h1v1h-1zM381 185h1v1h-1zM381 166h1v1h-1zM381 146h1v1h-1zM381 127h1v1h-1zM381 107h1v1h-1zM381 87h1v1h-1zM381 68h1v1h-1zM381 48h1v1h-1zM381 28h1v1h-1zM381 9h1v1h-1zM401 558h1v1h-1zM401 539h1v1h-1zM401 519h1v1h-1zM401 499h1v1h-1zM401 480h1v1h-1zM401 460h1v1h-1zM401 441h1v1h-1zM401 421h1v1h-1zM401 401h1v1h-1zM401 382h1v1h-1zM401 362h1v1h-1zM401 342h1v1h-1zM401 323h1v1h-1zM401 303h1v1h-1zM401 284h1v1h-1zM401 264h1v1h-1zM401 244h1v1h-1zM401 225h1v1h-1zM401 205h1v1h-1zM401 185h1v1h-1zM401 166h1v1h-1zM401 146h1v1h-1zM401 127h1v1h-1zM401 107h1v1h-1zM401 87h1v1h-1zM401 68h1v1h-1zM401 48h1v1h-1zM401 28h1v1h-1zM401 9h1v1h-1zM421 558h1v1h-1zM421 539h1v1h-1zM421 519h1v1h-1zM421 499h1v1h-1zM421 480h1v1h-1zM421 460h1v1h-1zM421 441h1v1h-1zM421 421h1v1h-1zM421 401h1v1h-1zM421 382h1v1h-1zM421 362h1v1h-1zM421 342h1v1h-1zM421 323h1v1h-1zM421 303h1v1h-1zM421 284h1v1h-1zM421 264h1v1h-1zM421 244h1v1h-1zM421 225h1v1h-1zM421 205h1v1h-1zM421 185h1v1h-1zM421 166h1v1h-1zM421 146h1v1h-1zM421 127h1v1h-1zM421 107h1v1h-1zM421 87h1v1h-1zM421 68h1v1h-1zM421 48h1v1h-1zM421 28h1v1h-1zM421 9h1v1h-1zM440 558h1v1h-1zM440 539h1v1h-1zM440 519h1v1h-1zM440 499h1v1h-1zM440 480h1v1h-1zM440 460h1v1h-1zM440 441h1v1h-1zM440 421h1v1h-1zM440 401h1v1h-1zM440 382h1v1h-1zM440 362h1v1h-1zM440 342h1v1h-1zM440 323h1v1h-1zM440 303h1v1h-1zM440 284h1v1h-1zM440 264h1v1h-1zM440 244h1v1h-1zM440 225h1v1h-1zM440 205h1v1h-1zM440 185h1v1h-1zM440 166h1v1h-1zM440 146h1v1h-1zM440 127h1v1h-1zM440 107h1v1h-1zM440 87h1v1h-1zM440 68h1v1h-1zM440 48h1v1h-1zM440 28h1v1h-1zM440 9h1v1h-1zM460 558h1v1h-1zM460 539h1v1h-1zM460 519h1v1h-1zM460 499h1v1h-1zM460 480h1v1h-1zM460 460h1v1h-1zM460 441h1v1h-1zM460 421h1v1h-1zM460 401h1v1h-1zM460 382h1v1h-1zM460 362h1v1h-1zM460 342h1v1h-1zM460 323h1v1h-1zM460 303h1v1h-1zM460 284h1v1h-1zM460 264h1v1h-1zM460 244h1v1h-1zM460 225h1v1h-1zM460 205h1v1h-1zM460 185h1v1h-1zM460 166h1v1h-1zM460 146h1v1h-1zM460 127h1v1h-1zM460 107h1v1h-1zM460 87h1v1h-1zM460 68h1v1h-1zM460 48h1v1h-1zM460 28h1v1h-1zM460 9h1v1h-1zM480 558h1v1h-1zM480 539h1v1h-1zM480 519h1v1h-1zM480 499h1v1h-1zM480 480h1v1h-1zM480 460h1v1h-1zM480 441h1v1h-1zM480 421h1v1h-1zM480 401h1v1h-1zM480 382h1v1h-1zM480 362h1v1h-1zM480 342h1v1h-1zM480 323h1v1h-1zM480 303h1v1h-1zM480 284h1v1h-1zM480 264h1v1h-1zM480 244h1v1h-1zM480 225h1v1h-1zM480 205h1v1h-1zM480 185h1v1h-1zM480 166h1v1h-1zM480 146h1v1h-1zM480 127h1v1h-1zM480 107h1v1h-1zM480 87h1v1h-1zM480 68h1v1h-1zM480 48h1v1h-1zM480 28h1v1h-1zM480 9h1v1h-1zM499 558h1v1h-1zM499 539h1v1h-1zM499 519h1v1h-1zM499 499h1v1h-1zM499 480h1v1h-1zM499 460h1v1h-1zM499 441h1v1h-1zM499 421h1v1h-1zM499 401h1v1h-1zM499 382h1v1h-1zM499 362h1v1h-1zM499 342h1v1h-1zM499 323h1v1h-1zM499 303h1v1h-1zM499 284h1v1h-1zM499 264h1v1h-1zM499 244h1v1h-1zM499 225h1v1h-1zM499 205h1v1h-1zM499 185h1v1h-1zM499 166h1v1h-1zM499 146h1v1h-1zM499 127h1v1h-1zM499 107h1v1h-1zM499 87h1v1h-1zM499 68h1v1h-1zM499 48h1v1h-1zM499 28h1v1h-1zM499 9h1v1h-1zM519 558h1v1h-1zM519 539h1v1h-1zM519 519h1v1h-1zM519 499h1v1h-1zM519 480h1v1h-1zM519 460h1v1h-1zM519 441h1v1h-1zM519 421h1v1h-1zM519 401h1v1h-1zM519 382h1v1h-1zM519 362h1v1h-1zM519 342h1v1h-1zM519 323h1v1h-1zM519 303h1v1h-1zM519 284h1v1h-1zM519 264h1v1h-1zM519 244h1v1h-1zM519 225h1v1h-1zM519 205h1v1h-1zM519 185h1v1h-1zM519 166h1v1h-1zM519 146h1v1h-1zM519 127h1v1h-1zM519 107h1v1h-1zM519 87h1v1h-1zM519 68h1v1h-1zM519 48h1v1h-1zM519 28h1v1h-1zM519 9h1v1h-1zM539 558h1v1h-1zM539 539h1v1h-1zM539 519h1v1h-1zM539 499h1v1h-1zM539 480h1v1h-1zM539 460h1v1h-1zM539 441h1v1h-1zM539 421h1v1h-1zM539 401h1v1h-1zM539 382h1v1h-1zM539 362h1v1h-1zM539 342h1v1h-1zM539 323h1v1h-1zM539 303h1v1h-1zM539 284h1v1h-1zM539 264h1v1h-1zM539 244h1v1h-1zM539 225h1v1h-1zM539 205h1v1h-1zM539 185h1v1h-1zM539 166h1v1h-1zM539 146h1v1h-1zM539 127h1v1h-1zM539 107h1v1h-1zM539 87h1v1h-1zM539 68h1v1h-1zM539 48h1v1h-1zM539 28h1v1h-1zM539 9h1v1h-1zM558 558h1v1h-1zM558 539h1v1h-1zM558 519h1v1h-1zM558 499h1v1h-1zM558 480h1v1h-1zM558 460h1v1h-1zM558 441h1v1h-1zM558 421h1v1h-1zM558 401h1v1h-1zM558 382h1v1h-1zM558 362h1v1h-1zM558 342h1v1h-1zM558 323h1v1h-1zM558 303h1v1h-1zM558 284h1v1h-1zM558 264h1v1h-1zM558 244h1v1h-1zM558 225h1v1h-1zM558 205h1v1h-1zM558 185h1v1h-1zM558 166h1v1h-1zM558 146h1v1h-1zM558 127h1v1h-1zM558 107h1v1h-1zM558 87h1v1h-1zM558 68h1v1h-1zM558 48h1v1h-1zM558 28h1v1h-1zM558 9h1v1h-1zM578 558h1v1h-1zM578 539h1v1h-1zM578 519h1v1h-1zM578 499h1v1h-1zM578 480h1v1h-1zM578 460h1v1h-1zM578 441h1v1h-1zM578 421h1v1h-1zM578 401h1v1h-1zM578 382h1v1h-1zM578 362h1v1h-1zM578 342h1v1h-1zM578 323h1v1h-1zM578 303h1v1h-1zM578 284h1v1h-1zM578 264h1v1h-1zM578 244h1v1h-1zM578 225h1v1h-1zM578 205h1v1h-1zM578 185h1v1h-1zM578 166h1v1h-1zM578 146h1v1h-1zM578 127h1v1h-1zM578 107h1v1h-1zM578 87h1v1h-1zM578 68h1v1h-1zM578 48h1v1h-1zM578 28h1v1h-1zM578 9h1v1h-1zM598 558h1v1h-1zM598 539h1v1h-1zM598 519h1v1h-1zM598 499h1v1h-1zM598 480h1v1h-1zM598 460h1v1h-1zM598 441h1v1h-1zM598 421h1v1h-1zM598 401h1v1h-1zM598 382h1v1h-1zM598 362h1v1h-1zM598 342h1v1h-1zM598 323h1v1h-1zM598 303h1v1h-1zM598 284h1v1h-1zM598 264h1v1h-1zM598 244h1v1h-1zM598 225h1v1h-1zM598 205h1v1h-1zM598 185h1v1h-1zM598 166h1v1h-1zM598 146h1v1h-1zM598 127h1v1h-1zM598 107h1v1h-1zM598 87h1v1h-1zM598 68h1v1h-1zM598 48h1v1h-1zM598 28h1v1h-1zM598 9h1v1h-1zM617 558h1v1h-1zM617 539h1v1h-1zM617 519h1v1h-1zM617 499h1v1h-1zM617 480h1v1h-1zM617 460h1v1h-1zM617 441h1v1h-1zM617 421h1v1h-1zM617 401h1v1h-1zM617 382h1v1h-1zM617 362h1v1h-1zM617 342h1v1h-1zM617 323h1v1h-1zM617 303h1v1h-1zM617 284h1v1h-1zM617 264h1v1h-1zM617 244h1v1h-1zM617 225h1v1h-1zM617 205h1v1h-1zM617 185h1v1h-1zM617 166h1v1h-1zM617 146h1v1h-1zM617 127h1v1h-1zM617 107h1v1h-1zM617 87h1v1h-1zM617 68h1v1h-1zM617 48h1v1h-1zM617 28h1v1h-1zM617 9h1v1h-1zM637 558h1v1h-1zM637 539h1v1h-1zM637 519h1v1h-1zM637 499h1v1h-1zM637 480h1v1h-1zM637 460h1v1h-1zM637 441h1v1h-1zM637 421h1v1h-1zM637 401h1v1h-1zM637 382h1v1h-1zM637 362h1v1h-1zM637 342h1v1h-1zM637 323h1v1h-1zM637 303h1v1h-1zM637 284h1v1h-1zM637 264h1v1h-1zM637 244h1v1h-1zM637 225h1v1h-1zM637 205h1v1h-1zM637 185h1v1h-1zM637 166h1v1h-1zM637 146h1v1h-1zM637 127h1v1h-1zM637 107h1v1h-1zM637 87h1v1h-1zM637 68h1v1h-1zM637 48h1v1h-1zM637 28h1v1h-1zM637 9h1v1h-1zM657 558h1v1h-1zM657 539h1v1h-1zM657 519h1v1h-1zM657 499h1v1h-1zM657 480h1v1h-1zM657 460h1v1h-1zM657 441h1v1h-1zM657 421h1v1h-1zM657 401h1v1h-1zM657 382h1v1h-1zM657 362h1v1h-1zM657 342h1v1h-1zM657 323h1v1h-1zM657 303h1v1h-1zM657 284h1v1h-1zM657 264h1v1h-1zM657 244h1v1h-1zM657 225h1v1h-1zM657 205h1v1h-1zM657 185h1v1h-1zM657 166h1v1h-1zM657 146h1v1h-1zM657 127h1v1h-1zM657 107h1v1h-1zM657 87h1v1h-1zM657 68h1v1h-1zM657 48h1v1h-1zM657 28h1v1h-1zM657 9h1v1h-1zM676 558h1v1h-1zM676 539h1v1h-1zM676 519h1v1h-1zM676 499h1v1h-1zM676 480h1v1h-1zM676 460h1v1h-1zM676 441h1v1h-1zM676 421h1v1h-1zM676 401h1v1h-1zM676 382h1v1h-1zM676 362h1v1h-1zM676 342h1v1h-1zM676 323h1v1h-1zM676 303h1v1h-1zM676 284h1v1h-1zM676 264h1v1h-1zM676 244h1v1h-1zM676 225h1v1h-1zM676 205h1v1h-1zM676 185h1v1h-1zM676 166h1v1h-1zM676 146h1v1h-1zM676 127h1v1h-1zM676 107h1v1h-1zM676 87h1v1h-1zM676 68h1v1h-1zM676 48h1v1h-1zM676 28h1v1h-1zM676 9h1v1h-1zM696 558h1v1h-1zM696 539h1v1h-1zM696 519h1v1h-1zM696 499h1v1h-1zM696 480h1v1h-1zM696 460h1v1h-1zM696 441h1v1h-1zM696 421h1v1h-1zM696 401h1v1h-1zM696 382h1v1h-1zM696 362h1v1h-1zM696 342h1v1h-1zM696 323h1v1h-1zM696 303h1v1h-1zM696 284h1v1h-1zM696 264h1v1h-1zM696 244h1v1h-1zM696 225h1v1h-1zM696 205h1v1h-1zM696 185h1v1h-1zM696 166h1v1h-1zM696 146h1v1h-1zM696 127h1v1h-1zM696 107h1v1h-1zM696 87h1v1h-1zM696 68h1v1h-1zM696 48h1v1h-1zM696 28h1v1h-1zM696 9h1v1h-1zM715 558h1v1h-1zM715 539h1v1h-1zM715 519h1v1h-1zM715 499h1v1h-1zM715 480h1v1h-1zM715 460h1v1h-1zM715 441h1v1h-1zM715 421h1v1h-1zM715 401h1v1h-1zM715 382h1v1h-1zM715 362h1v1h-1zM715 342h1v1h-1zM715 323h1v1h-1zM715 303h1v1h-1zM715 284h1v1h-1zM715 264h1v1h-1zM715 244h1v1h-1zM715 225h1v1h-1zM715 205h1v1h-1zM715 185h1v1h-1zM715 166h1v1h-1zM715 146h1v1h-1zM715 127h1v1h-1zM715 107h1v1h-1zM715 87h1v1h-1zM715 68h1v1h-1zM715 48h1v1h-1zM715 28h1v1h-1zM715 9h1v1h-1zM735 558h1v1h-1zM735 539h1v1h-1zM735 519h1v1h-1zM735 499h1v1h-1zM735 480h1v1h-1zM735 460h1v1h-1zM735 441h1v1h-1zM735 421h1v1h-1zM735 401h1v1h-1zM735 382h1v1h-1zM735 362h1v1h-1zM735 342h1v1h-1zM735 323h1v1h-1zM735 303h1v1h-1zM735 284h1v1h-1zM735 264h1v1h-1zM735 244h1v1h-1zM735 225h1v1h-1zM735 205h1v1h-1zM735 185h1v1h-1zM735 166h1v1h-1zM735 146h1v1h-1zM735 127h1v1h-1zM735 107h1v1h-1zM735 87h1v1h-1zM735 68h1v1h-1zM735 48h1v1h-1zM735 28h1v1h-1zM735 9h1v1h-1zM755 558h1v1h-1zM755 539h1v1h-1zM755 519h1v1h-1zM755 499h1v1h-1zM755 480h1v1h-1zM755 460h1v1h-1zM755 441h1v1h-1zM755 421h1v1h-1zM755 401h1v1h-1zM755 382h1v1h-1zM755 362h1v1h-1zM755 342h1v1h-1zM755 323h1v1h-1zM755 303h1v1h-1zM755 284h1v1h-1zM755 264h1v1h-1zM755 244h1v1h-1zM755 225h1v1h-1zM755 205h1v1h-1zM755 185h1v1h-1zM755 166h1v1h-1zM755 146h1v1h-1zM755 127h1v1h-1zM755 107h1v1h-1zM755 87h1v1h-1zM755 68h1v1h-1zM755 48h1v1h-1zM755 28h1v1h-1zM755 9h1v1h-1zM774 558h1v1h-1zM774 539h1v1h-1zM774 519h1v1h-1zM774 499h1v1h-1zM774 480h1v1h-1zM774 460h1v1h-1zM774 441h1v1h-1zM774 421h1v1h-1zM774 401h1v1h-1zM774 382h1v1h-1zM774 362h1v1h-1zM774 342h1v1h-1zM774 323h1v1h-1zM774 303h1v1h-1zM774 284h1v1h-1zM774 264h1v1h-1zM774 244h1v1h-1zM774 225h1v1h-1zM774 205h1v1h-1zM774 185h1v1h-1zM774 166h1v1h-1zM774 146h1v1h-1zM774 127h1v1h-1zM774 107h1v1h-1zM774 87h1v1h-1zM774 68h1v1h-1zM774 48h1v1h-1zM774 28h1v1h-1zM774 9h1v1h-1zM794 558h1v1h-1zM794 539h1v1h-1zM794 519h1v1h-1zM794 499h1v1h-1zM794 480h1v1h-1zM794 460h1v1h-1zM794 441h1v1h-1zM794 421h1v1h-1zM794 401h1v1h-1zM794 382h1v1h-1zM794 362h1v1h-1zM794 342h1v1h-1zM794 323h1v1h-1zM794 303h1v1h-1zM794 284h1v1h-1zM794 264h1v1h-1zM794 244h1v1h-1zM794 225h1v1h-1zM794 205h1v1h-1zM794 185h1v1h-1zM794 166h1v1h-1zM794 146h1v1h-1zM794 127h1v1h-1zM794 107h1v1h-1zM794 87h1v1h-1zM794 68h1v1h-1zM794 48h1v1h-1zM794 28h1v1h-1zM794 9h1v1h-1zM814 558h1v1h-1zM814 539h1v1h-1zM814 519h1v1h-1zM814 499h1v1h-1zM814 480h1v1h-1zM814 460h1v1h-1zM814 441h1v1h-1zM814 421h1v1h-1zM814 401h1v1h-1zM814 382h1v1h-1zM814 362h1v1h-1zM814 342h1v1h-1zM814 323h1v1h-1zM814 303h1v1h-1zM814 284h1v1h-1zM814 264h1v1h-1zM814 244h1v1h-1zM814 225h1v1h-1zM814 205h1v1h-1zM814 185h1v1h-1zM814 166h1v1h-1zM814 146h1v1h-1zM814 127h1v1h-1zM814 107h1v1h-1zM814 87h1v1h-1zM814 68h1v1h-1zM814 48h1v1h-1zM814 28h1v1h-1zM814 9h1v1h-1zM833 558h1v1h-1zM833 539h1v1h-1zM833 519h1v1h-1zM833 499h1v1h-1zM833 480h1v1h-1zM833 460h1v1h-1zM833 441h1v1h-1zM833 421h1v1h-1zM833 401h1v1h-1zM833 382h1v1h-1zM833 362h1v1h-1zM833 342h1v1h-1zM833 323h1v1h-1zM833 303h1v1h-1zM833 284h1v1h-1zM833 264h1v1h-1zM833 244h1v1h-1zM833 225h1v1h-1zM833 205h1v1h-1zM833 185h1v1h-1zM833 166h1v1h-1zM833 146h1v1h-1zM833 127h1v1h-1zM833 107h1v1h-1zM833 87h1v1h-1zM833 68h1v1h-1zM833 48h1v1h-1zM833 28h1v1h-1zM833 9h1v1h-1zM853 558h1v1h-1zM853 539h1v1h-1zM853 519h1v1h-1zM853 499h1v1h-1zM853 480h1v1h-1zM853 460h1v1h-1zM853 441h1v1h-1zM853 421h1v1h-1zM853 401h1v1h-1zM853 382h1v1h-1zM853 362h1v1h-1zM853 342h1v1h-1zM853 323h1v1h-1zM853 303h1v1h-1zM853 284h1v1h-1zM853 264h1v1h-1zM853 244h1v1h-1zM853 225h1v1h-1zM853 205h1v1h-1zM853 185h1v1h-1zM853 166h1v1h-1zM853 146h1v1h-1zM853 127h1v1h-1zM853 107h1v1h-1zM853 87h1v1h-1zM853 68h1v1h-1zM853 48h1v1h-1zM853 28h1v1h-1zM853 9h1v1h-1zM873 558h1v1h-1zM873 539h1v1h-1zM873 519h1v1h-1zM873 499h1v1h-1zM873 480h1v1h-1zM873 460h1v1h-1zM873 441h1v1h-1zM873 421h1v1h-1zM873 401h1v1h-1zM873 382h1v1h-1zM873 362h1v1h-1zM873 342h1v1h-1zM873 323h1v1h-1zM873 303h1v1h-1zM873 284h1v1h-1zM873 264h1v1h-1zM873 244h1v1h-1zM873 225h1v1h-1zM873 205h1v1h-1zM873 185h1v1h-1zM873 166h1v1h-1zM873 146h1v1h-1zM873 127h1v1h-1zM873 107h1v1h-1zM873 87h1v1h-1zM873 68h1v1h-1zM873 48h1v1h-1zM873 28h1v1h-1zM873 9h1v1h-1zM892 558h1v1h-1zM892 539h1v1h-1zM892 519h1v1h-1zM892 499h1v1h-1zM892 480h1v1h-1zM892 460h1v1h-1zM892 441h1v1h-1zM892 421h1v1h-1zM892 401h1v1h-1zM892 382h1v1h-1zM892 362h1v1h-1zM892 342h1v1h-1zM892 323h1v1h-1zM892 303h1v1h-1zM892 284h1v1h-1zM892 264h1v1h-1zM892 244h1v1h-1zM892 225h1v1h-1zM892 205h1v1h-1zM892 185h1v1h-1zM892 166h1v1h-1zM892 146h1v1h-1zM892 127h1v1h-1zM892 107h1v1h-1zM892 87h1v1h-1zM892 68h1v1h-1zM892 48h1v1h-1zM892 28h1v1h-1zM892 9h1v1h-1zM912 558h1v1h-1zM912 539h1v1h-1zM912 519h1v1h-1zM912 499h1v1h-1zM912 480h1v1h-1zM912 460h1v1h-1zM912 441h1v1h-1zM912 421h1v1h-1zM912 401h1v1h-1zM912 382h1v1h-1zM912 362h1v1h-1zM912 342h1v1h-1zM912 323h1v1h-1zM912 303h1v1h-1zM912 284h1v1h-1zM912 264h1v1h-1zM912 244h1v1h-1zM912 225h1v1h-1zM912 205h1v1h-1zM912 185h1v1h-1zM912 166h1v1h-1zM912 146h1v1h-1zM912 127h1v1h-1zM912 107h1v1h-1zM912 87h1v1h-1zM912 68h1v1h-1zM912 48h1v1h-1zM912 28h1v1h-1zM912 9h1v1h-1zM932 558h1v1h-1zM932 539h1v1h-1zM932 519h1v1h-1zM932 499h1v1h-1zM932 480h1v1h-1zM932 460h1v1h-1zM932 441h1v1h-1zM932 421h1v1h-1zM932 401h1v1h-1zM932 382h1v1h-1zM932 362h1v1h-1zM932 342h1v1h-1zM932 323h1v1h-1zM932 303h1v1h-1zM932 284h1v1h-1zM932 264h1v1h-1zM932 244h1v1h-1zM932 225h1v1h-1zM932 205h1v1h-1zM932 185h1v1h-1zM932 166h1v1h-1zM932 146h1v1h-1zM932 127h1v1h-1zM932 107h1v1h-1zM932 87h1v1h-1zM932 68h1v1h-1zM932 48h1v1h-1zM932 28h1v1h-1zM932 9h1v1h-1zM951 558h1v1h-1zM951 539h1v1h-1zM951 519h1v1h-1zM951 499h1v1h-1zM951 480h1v1h-1zM951 460h1v1h-1zM951 441h1v1h-1zM951 421h1v1h-1zM951 401h1v1h-1zM951 382h1v1h-1zM951 362h1v1h-1zM951 342h1v1h-1zM951 323h1v1h-1zM951 303h1v1h-1zM951 284h1v1h-1zM951 264h1v1h-1zM951 244h1v1h-1zM951 225h1v1h-1zM951 205h1v1h-1zM951 185h1v1h-1zM951 166h1v1h-1zM951 146h1v1h-1zM951 127h1v1h-1zM951 107h1v1h-1zM951 87h1v1h-1zM951 68h1v1h-1zM951 48h1v1h-1zM951 28h1v1h-1zM951 9h1v1h-1zM971 558h1v1h-1zM971 539h1v1h-1zM971 519h1v1h-1zM971 499h1v1h-1zM971 480h1v1h-1zM971 460h1v1h-1zM971 441h1v1h-1zM971 421h1v1h-1zM971 401h1v1h-1zM971 382h1v1h-1zM971 362h1v1h-1zM971 342h1v1h-1zM971 323h1v1h-1zM971 303h1v1h-1zM971 284h1v1h-1zM971 264h1v1h-1zM971 244h1v1h-1zM971 225h1v1h-1zM971 205h1v1h-1zM971 185h1v1h-1zM971 166h1v1h-1zM971 146h1v1h-1zM971 127h1v1h-1zM971 107h1v1h-1zM971 87h1v1h-1zM971 68h1v1h-1zM971 48h1v1h-1zM971 28h1v1h-1zM971 9h1v1h-1zM991 558h1v1h-1zM991 539h1v1h-1zM991 519h1v1h-1zM991 499h1v1h-1zM991 480h1v1h-1zM991 460h1v1h-1zM991 441h1v1h-1zM991 421h1v1h-1zM991 401h1v1h-1zM991 382h1v1h-1zM991 362h1v1h-1zM991 342h1v1h-1zM991 323h1v1h-1zM991 303h1v1h-1zM991 284h1v1h-1zM991 264h1v1h-1zM991 244h1v1h-1zM991 225h1v1h-1zM991 205h1v1h-1zM991 185h1v1h-1zM991 166h1v1h-1zM991 146h1v1h-1zM991 127h1v1h-1zM991 107h1v1h-1zM991 87h1v1h-1zM991 68h1v1h-1zM991 48h1v1h-1zM991 28h1v1h-1zM991 9h1v1h-1zM1010 558h1v1h-1zM1010 539h1v1h-1zM1010 519h1v1h-1zM1010 499h1v1h-1zM1010 480h1v1h-1zM1010 460h1v1h-1zM1010 441h1v1h-1zM1010 421h1v1h-1zM1010 401h1v1h-1zM1010 382h1v1h-1zM1010 362h1v1h-1zM1010 342h1v1h-1zM1010 323h1v1h-1zM1010 303h1v1h-1zM1010 284h1v1h-1zM1010 264h1v1h-1zM1010 244h1v1h-1zM1010 225h1v1h-1zM1010 205h1v1h-1zM1010 185h1v1h-1zM1010 166h1v1h-1zM1010 146h1v1h-1zM1010 127h1v1h-1zM1010 107h1v1h-1zM1010 87h1v1h-1zM1010 68h1v1h-1zM1010 48h1v1h-1zM1010 28h1v1h-1zM1010 9h1v1h-1zM1030 558h1v1h-1zM1030 539h1v1h-1zM1030 519h1v1h-1zM1030 499h1v1h-1zM1030 480h1v1h-1zM1030 460h1v1h-1zM1030 441h1v1h-1zM1030 421h1v1h-1zM1030 401h1v1h-1zM1030 382h1v1h-1zM1030 362h1v1h-1zM1030 342h1v1h-1zM1030 323h1v1h-1zM1030 303h1v1h-1zM1030 284h1v1h-1zM1030 264h1v1h-1zM1030 244h1v1h-1zM1030 225h1v1h-1zM1030 205h1v1h-1zM1030 185h1v1h-1zM1030 166h1v1h-1zM1030 146h1v1h-1zM1030 127h1v1h-1zM1030 107h1v1h-1zM1030 87h1v1h-1zM1030 68h1v1h-1zM1030 48h1v1h-1zM1030 28h1v1h-1zM1030 9h1v1h-1z" fill="#4c4c4c"/><line x1="116.18" y1="-5.00" x2="116.18" y2="87.20" stroke="#0890ff" stroke-width="3.8" stroke-linecap="round" /><line x1="204.60" y1="-5.00" x2="204.60" y2="57.30" stroke="#0890ff" stroke-width="3.8" stroke-linecap="round" /><line x1="361.80" y1="-5.00" x2="361.80" y2="57.30" stroke="#0890ff" stroke-width="3.8" stroke-linecap="round" /><line x1="450.23" y1="-5.00" x2="450.23" y2="87.20" stroke="#0890ff" stroke-width="3.8" stroke-linecap="round" /><line x1="-5.00" y1="67.63" x2="135.70" y2="67.63" stroke="#0890ff" stroke-width="3.8" stroke-linecap="round" /><line x1="-5.00" y1="538.75" x2="37.30" y2="538.75" stroke="#0890ff" stroke-width="3.8" stroke-linecap="round" /><line x1="47.40" y1="548.80" x2="47.40" y2="585.00" stroke="#0890ff" stroke-width="3.8" stroke-linecap="round" /><line x1="794.10" y1="548.80" x2="794.10" y2="585.00" stroke="#0890ff" stroke-width="3.8" stroke-linecap="round" /><line x1="1029.90" y1="548.80" x2="1029.90" y2="585.00" stroke="#0890ff" stroke-width="3.8" stroke-linecap="round" /><line x1="1011.00" y1="420.97" x2="1050.00" y2="420.97" stroke="#0890ff" stroke-width="3.8" stroke-linecap="round" /><line x1="1040.20" y1="538.75" x2="1050.00" y2="538.75" stroke="#0890ff" stroke-width="3.8" stroke-linecap="round" /><line x1="283.20" y1="7.40" x2="283.20" y2="582.0" stroke="#f00" stroke-width="2.9" stroke-dasharray="82.8 14.3 18.8 13.7" stroke-dashoffset="5.3"/><line x1="204.60" y1="67.63" x2="204.60" y2="538.75" stroke="#fff" stroke-width="2.9" stroke-dasharray="35 13.69" stroke-dashoffset="25.12"/><line x1="361.80" y1="67.63" x2="361.80" y2="538.75" stroke="#fff" stroke-width="2.9" stroke-dasharray="35 13.69" stroke-dashoffset="25.12"/><polygon points="116.18,97.08 145.65,67.63 420.75,67.63 450.23,97.08" stroke="#fff" stroke-width="5" fill="none" stroke-linejoin="round" stroke-linecap="round"/><polyline points="116.18,420.97 116.18,97.08 450.23,97.08 450.23,420.97" stroke="#fff" stroke-width="5" fill="none" stroke-linejoin="round" stroke-linecap="round"/><polygon points="47.40,450.41 76.88,420.97 1000.42,420.97 1029.90,450.41" stroke="#fff" stroke-width="5" fill="none" stroke-linejoin="round" stroke-linecap="round"/><polygon points="47.40,450.41 1029.90,450.41 1029.90,538.75 47.40,538.75" stroke="#fff" stroke-width="5" fill="none" stroke-linejoin="round" stroke-linecap="round"/><polyline points="782.31,420.97 794.10,450.41 794.10,538.75" stroke="#fff" stroke-width="5" fill="none" stroke-linejoin="round" stroke-linecap="round"/></svg></div><div class="a" style="left:1066px;top:47px;width:17px;height:577px;background:#f7f7f7"></div><div class="a" style="left:23px;top:623.7px;width:1060px;height:16px;background:#f8f8f8"></div><div class="a" style="left:1027px;top:623.7px;width:54px;height:15.3px;background:#ebebeb"></div><div class="t" style="left:1047.20px;top:627.09px;font-size:12.5px;line-height:13.96px;color:#000;letter-spacing:-0.217px;">1 &lt; 10</div><div class="a" style="left:0;top:640px;width:1083px;height:2px;background:linear-gradient(#d6d6d6,#bdbdbd)"></div><div class="a" style="left:1px;top:642px;width:1081px;height:20px;background:#fff;border-bottom:1px solid #c6c6c6"></div><div class="t" style="left:4.80px;top:644.47px;font-size:12.3px;line-height:13.74px;color:#0000dc;letter-spacing:0.106px;font-style:italic;-webkit-text-stroke:0.25px #0000dc;">Comando:</div><div class="t" style="left:69.80px;top:644.47px;font-size:12.3px;line-height:13.74px;color:#0000dc;letter-spacing:0.508px;-webkit-text-stroke:0.25px #0000dc;">zoomin</div><div class="t" style="left:1.60px;top:670.34px;font-size:13px;line-height:14.52px;color:#000;letter-spacing:0.053px;-webkit-text-stroke:0.2px #000;">Comando:</div><div class="a" style="left:66px;top:668.4px;width:989px;height:17.2px;background:#fff"></div><div class="a" style="left:1055px;top:664px;width:23px;height:23px;border:1px solid #b3b3b3;background:linear-gradient(#fcfcfc,#ececec)"></div><div class="a" style="left:1060.5px;top:671.5px;width:12px;height:5.3px;border:1px solid #111;border-top:3px solid #111;background:#fff"></div><svg style="left:0;top:0" width="1083" height="690" viewBox="72 108 1083 690"><rect x="1143" y="349" width="8" height="189.4" rx="4" fill="#7f7f7f"/><rect x="344" y="736.8" width="506" height="8.2" rx="4.1" fill="#7f7f7f"/><rect x="1143.8" y="749.6" width="7" height="17.6" rx="3.5" fill="#7f7f7f"/></svg></div>
<div id="layers"><div class="a" style="left:0;top:0;width:299px;height:23px;background:linear-gradient(#ebebeb,#e6e6e6)"></div><div class="a" style="left:0;top:0;width:1px;height:690px;background:#bcbcbc"></div><div class="a" style="left:298px;top:22px;width:1px;height:668px;background:#cfcfcf"></div><svg style="left:2px;top:4px" width="34" height="14" viewBox="0 0 34 14">
<circle cx="7" cy="6.7" r="6.6" fill="#575757"/><path d="M4.3 4 L9.7 9.4 M9.7 4 L4.3 9.4" stroke="#eee" stroke-width="2" stroke-linecap="round"/>
<circle cx="25" cy="6.7" r="6.6" fill="#575757"/><rect x="23.6" y="3.8" width="4.6" height="3.8" fill="none" stroke="#eee" stroke-width="1.1"/><rect x="21.6" y="5.8" width="4.6" height="3.8" fill="#575757" stroke="#eee" stroke-width="1.1"/>
</svg><div class="t" style="left:129.50px;top:4.21px;font-size:11.7px;line-height:13.07px;color:#1a1a1a;letter-spacing:0.004px;-webkit-text-stroke:0.15px #1a1a1a;">Lista de capas</div><div class="lbtn" style="left:0px;width:60px"></div><div class="lbtn" style="left:60px;width:60px"></div><div class="lbtn" style="left:120px;width:60px"></div><div class="lbtn" style="left:180px;width:60px"></div><div class="lbtn" style="left:240px;width:59px"></div><svg style="left:0;top:0" width="299" height="160" viewBox="1155 108 299 160"><g transform="translate(-238.20 -24.20)" opacity="1"><path d="M1415.3 166.9 C1417.2 162.6 1420.8 161 1423.6 161 C1426.8 161 1429.8 163.4 1431 167 C1429.2 170.2 1426 172.2 1422.6 172.2 C1419.4 172.2 1416.6 170.2 1415.3 166.9 Z" fill="#000"/><path d="M1417.9 166.9 C1418.3 165.7 1419.2 165.4 1420 165.4 H1427 C1428 165.7 1428.3 166.4 1428.1 167.2 C1427.2 168.9 1425.2 170 1423 170 C1420.6 170 1418.6 168.6 1417.9 166.6 Z" fill="#fff"/><path d="M1419.7 164.6 H1426.1 C1426.3 167.2 1424.9 168.9 1422.9 168.9 C1420.9 168.9 1419.5 167.2 1419.7 164.6 Z" fill="#000"/><circle cx="1421.9" cy="165.5" r="0.75" fill="#9a9a9a"/></g><g transform="translate(-178.20 -24.20)" opacity="1"><path d="M1415.3 166.9 C1417.2 162.6 1420.8 161 1423.6 161 C1426.8 161 1429.8 163.4 1431 167 C1429.2 170.2 1426 172.2 1422.6 172.2 C1419.4 172.2 1416.6 170.2 1415.3 166.9 Z" fill="#9b9b9b"/><path d="M1417.9 166.9 C1418.3 165.7 1419.2 165.4 1420 165.4 H1427 C1428 165.7 1428.3 166.4 1428.1 167.2 C1427.2 168.9 1425.2 170 1423 170 C1420.6 170 1418.6 168.6 1417.9 166.6 Z" fill="#fff"/><path d="M1419.7 164.6 H1426.1 C1426.3 167.2 1424.9 168.9 1422.9 168.9 C1420.9 168.9 1419.5 167.2 1419.7 164.6 Z" fill="#9b9b9b"/><circle cx="1421.9" cy="165.5" r="0.75" fill="#9a9a9a"/></g><path d="M1303.7 137.1 H1306.5 V141.7 H1311.1 V144.5 H1306.5 V149.1 H1303.7 V144.5 H1299.1 V141.7 H1303.7 Z" fill="#f80000" stroke="#a80000" stroke-width="0.5"/><rect x="1359" y="141.7" width="12" height="2.8" fill="#f80000" stroke="#a80000" stroke-width="0.5"/><g transform="translate(1418.2 149.7) rotate(-44.13)"><path d="M0 0 L3 -1.35 H18.528356645962916 V1.35 H3 Z" fill="#dba23c" stroke="#9c6a1c" stroke-width="0.5"/><path d="M3 -0.35 H15.928356645962916" stroke="#f2cc6e" stroke-width="0.7"/><rect x="15.73" y="-1.35" width="2.8" height="2.7" fill="#e42424"/><path d="M0 0 L1.4 -0.63 V0.63 Z" fill="#5a4020"/></g><g transform="translate(1394.8 193.1) rotate(-44.54)"><path d="M0 0 L3 -1.35 H17.67823520603806 V1.35 H3 Z" fill="#dba23c" stroke="#9c6a1c" stroke-width="0.5"/><path d="M3 -0.35 H15.07823520603806" stroke="#f2cc6e" stroke-width="0.7"/><rect x="14.88" y="-1.35" width="2.8" height="2.7" fill="#e42424"/><path d="M0 0 L1.4 -0.63 V0.63 Z" fill="#5a4020"/></g><g transform="translate(0.00 0.00)" opacity="1"><path d="M1415.3 166.9 C1417.2 162.6 1420.8 161 1423.6 161 C1426.8 161 1429.8 163.4 1431 167 C1429.2 170.2 1426 172.2 1422.6 172.2 C1419.4 172.2 1416.6 170.2 1415.3 166.9 Z" fill="#000"/><path d="M1417.9 166.9 C1418.3 165.7 1419.2 165.4 1420 165.4 H1427 C1428 165.7 1428.3 166.4 1428.1 167.2 C1427.2 168.9 1425.2 170 1423 170 C1420.6 170 1418.6 168.6 1417.9 166.6 Z" fill="#fff"/><path d="M1419.7 164.6 H1426.1 C1426.3 167.2 1424.9 168.9 1422.9 168.9 C1420.9 168.9 1419.5 167.2 1419.7 164.6 Z" fill="#000"/><circle cx="1421.9" cy="165.5" r="0.75" fill="#9a9a9a"/></g><g transform="translate(0.00 0.00)"><path d="M1441.7 166.8 V164.2 A3.35 3.6 0 0 1 1448.4 164.2 V166.8" fill="none" stroke="#bcbcbc" stroke-width="1.25"/><rect x="1440.2" y="166.4" width="9.7" height="7.2" fill="#b5b5b5"/></g><g transform="translate(0.00 20.00)" opacity="1"><path d="M1415.3 166.9 C1417.2 162.6 1420.8 161 1423.6 161 C1426.8 161 1429.8 163.4 1431 167 C1429.2 170.2 1426 172.2 1422.6 172.2 C1419.4 172.2 1416.6 170.2 1415.3 166.9 Z" fill="#000"/><path d="M1417.9 166.9 C1418.3 165.7 1419.2 165.4 1420 165.4 H1427 C1428 165.7 1428.3 166.4 1428.1 167.2 C1427.2 168.9 1425.2 170 1423 170 C1420.6 170 1418.6 168.6 1417.9 166.6 Z" fill="#fff"/><path d="M1419.7 164.6 H1426.1 C1426.3 167.2 1424.9 168.9 1422.9 168.9 C1420.9 168.9 1419.5 167.2 1419.7 164.6 Z" fill="#000"/><circle cx="1421.9" cy="165.5" r="0.75" fill="#9a9a9a"/></g><g transform="translate(0.00 20.00)"><path d="M1441.7 166.8 V164.2 A3.35 3.6 0 0 1 1448.4 164.2 V166.8" fill="none" stroke="#bcbcbc" stroke-width="1.25"/><rect x="1440.2" y="166.4" width="9.7" height="7.2" fill="#b5b5b5"/></g><g transform="translate(0.00 40.00)" opacity="1"><path d="M1415.3 166.9 C1417.2 162.6 1420.8 161 1423.6 161 C1426.8 161 1429.8 163.4 1431 167 C1429.2 170.2 1426 172.2 1422.6 172.2 C1419.4 172.2 1416.6 170.2 1415.3 166.9 Z" fill="#000"/><path d="M1417.9 166.9 C1418.3 165.7 1419.2 165.4 1420 165.4 H1427 C1428 165.7 1428.3 166.4 1428.1 167.2 C1427.2 168.9 1425.2 170 1423 170 C1420.6 170 1418.6 168.6 1417.9 166.6 Z" fill="#fff"/><path d="M1419.7 164.6 H1426.1 C1426.3 167.2 1424.9 168.9 1422.9 168.9 C1420.9 168.9 1419.5 167.2 1419.7 164.6 Z" fill="#000"/><circle cx="1421.9" cy="165.5" r="0.75" fill="#9a9a9a"/></g><g transform="translate(0.00 40.00)"><path d="M1441.7 166.8 V164.2 A3.35 3.6 0 0 1 1448.4 164.2 V166.8" fill="none" stroke="#bcbcbc" stroke-width="1.25"/><rect x="1440.2" y="166.4" width="9.7" height="7.2" fill="#b5b5b5"/></g><g transform="translate(0.00 60.00)" opacity="1"><path d="M1415.3 166.9 C1417.2 162.6 1420.8 161 1423.6 161 C1426.8 161 1429.8 163.4 1431 167 C1429.2 170.2 1426 172.2 1422.6 172.2 C1419.4 172.2 1416.6 170.2 1415.3 166.9 Z" fill="#000"/><path d="M1417.9 166.9 C1418.3 165.7 1419.2 165.4 1420 165.4 H1427 C1428 165.7 1428.3 166.4 1428.1 167.2 C1427.2 168.9 1425.2 170 1423 170 C1420.6 170 1418.6 168.6 1417.9 166.6 Z" fill="#fff"/><path d="M1419.7 164.6 H1426.1 C1426.3 167.2 1424.9 168.9 1422.9 168.9 C1420.9 168.9 1419.5 167.2 1419.7 164.6 Z" fill="#000"/><circle cx="1421.9" cy="165.5" r="0.75" fill="#9a9a9a"/></g><g transform="translate(0.00 60.00)"><path d="M1441.7 166.8 V164.2 A3.35 3.6 0 0 1 1448.4 164.2 V166.8" fill="none" stroke="#bcbcbc" stroke-width="1.25"/><rect x="1440.2" y="166.4" width="9.7" height="7.2" fill="#b5b5b5"/></g><g transform="translate(0.00 80.00)" opacity="1"><path d="M1415.3 166.9 C1417.2 162.6 1420.8 161 1423.6 161 C1426.8 161 1429.8 163.4 1431 167 C1429.2 170.2 1426 172.2 1422.6 172.2 C1419.4 172.2 1416.6 170.2 1415.3 166.9 Z" fill="#000"/><path d="M1417.9 166.9 C1418.3 165.7 1419.2 165.4 1420 165.4 H1427 C1428 165.7 1428.3 166.4 1428.1 167.2 C1427.2 168.9 1425.2 170 1423 170 C1420.6 170 1418.6 168.6 1417.9 166.6 Z" fill="#fff"/><path d="M1419.7 164.6 H1426.1 C1426.3 167.2 1424.9 168.9 1422.9 168.9 C1420.9 168.9 1419.5 167.2 1419.7 164.6 Z" fill="#000"/><circle cx="1421.9" cy="165.5" r="0.75" fill="#9a9a9a"/></g><g transform="translate(0.00 80.00)"><path d="M1441.7 166.8 V164.2 A3.35 3.6 0 0 1 1448.4 164.2 V166.8" fill="none" stroke="#bcbcbc" stroke-width="1.25"/><rect x="1440.2" y="166.4" width="9.7" height="7.2" fill="#b5b5b5"/></g></svg><div class="a" style="left:6px;top:55px;width:14px;height:7px;border:1px solid #000;background:#fff"></div><div class="t" style="left:28.20px;top:52.23px;font-size:13px;line-height:14.52px;color:#111;letter-spacing:-0.730px;">0</div><!--EYE_0--><div class="a" style="left:6px;top:75px;width:14px;height:7px;border:1px solid #000;background:#f00"></div><div class="t" style="left:28.20px;top:72.23px;font-size:13px;line-height:14.52px;color:#111;letter-spacing:0.164px;">Center</div><!--EYE_1--><div class="a" style="left:6px;top:95px;width:14px;height:7px;border:1px solid #000;background:#fff"></div><div class="t" style="left:28.20px;top:92.23px;font-size:13px;line-height:14.52px;color:#111;letter-spacing:0.342px;">Defpoints</div><!--EYE_2--><div class="a" style="left:6px;top:115px;width:14px;height:7px;border:1px solid #000;background:#0890ff"></div><div class="t" style="left:28.20px;top:112.23px;font-size:13px;line-height:14.52px;color:#111;letter-spacing:0.159px;">Dimensions</div><!--EYE_3--><div class="a" style="left:6px;top:135px;width:14px;height:7px;border:1px solid #000;background:#000"></div><div class="t" style="left:28.20px;top:132.24px;font-size:13px;line-height:14.52px;color:#111;letter-spacing:0.217px;">Hidden</div><!--EYE_4--></div>
<div id="rtb"><div class="grip" style="left:9.5px;top:8px;width:1.6px;height:1.6px;background:#aaa"></div><div class="grip" style="left:14.9px;top:8px;width:1.6px;height:1.6px;background:#aaa"></div><div class="grip" style="left:20.3px;top:8px;width:1.6px;height:1.6px;background:#aaa"></div><div class="grip" style="left:25.7px;top:8px;width:1.6px;height:1.6px;background:#aaa"></div><div class="grip" style="left:31.1px;top:8px;width:1.6px;height:1.6px;background:#aaa"></div><div class="sel" style="left:2px;top:12.3px;width:46px;height:42.3px"></div><div class="sel" style="left:2px;top:308.8px;width:46px;height:42.7px"></div><div class="ricon" style="top:19.0px"><!--RICON_0--></div><div class="ricon" style="top:66.0px"><!--RICON_1--></div><div class="ricon" style="top:112.0px"><!--RICON_2--></div><div class="ricon" style="top:168.0px"><!--RICON_3--></div><div class="ricon" style="top:214.0px"><!--RICON_4--></div><div class="ricon" style="top:260.5px"><!--RICON_5--></div><div class="ricon" style="top:316.3px"><!--RICON_6--></div><div class="ricon" style="top:363.3px"><!--RICON_7--></div><div class="hsep" style="top:153.5px"></div><div class="hsep" style="top:301.5px"></div><svg style="left:0;top:0" width="46" height="420" viewBox="1454 108 46 420"><defs><linearGradient id="gScrew" x1="0" y1="0" x2="0" y2="1"><stop offset="0" stop-color="#e4e4e4"/><stop offset="0.45" stop-color="#b4b4b4"/><stop offset="1" stop-color="#6e6e6e"/></linearGradient><linearGradient id="gFun" x1="0" y1="0" x2="1" y2="0"><stop offset="0" stop-color="#c4c4c4"/><stop offset="1" stop-color="#7e7e7e"/></linearGradient></defs><path d="M1470.3 141 L1479.6 136.7 V144.8 L1470.3 148.9 Z" fill="#9e9e9e" stroke="#5a5a5a" stroke-width="0.6"/><path d="M1471.7 141 L1481 136.7 V144.9 L1471.7 149.1 Z" fill="#bdbdbd" stroke="#5a5a5a" stroke-width="0.6"/><path d="M1473 141 L1482.4 136.7 V145 L1473 149.2 Z" fill="#d6d6d6" stroke="#5a5a5a" stroke-width="0.6"/><path d="M1474.4 140.9 L1483.8 136.6 V145.1 L1474.4 149.4 Z" fill="#fff" stroke="#5a5a5a" stroke-width="0.7"/><path d="M1476.4 146.8 L1482 139.4 V144.4 Z" fill="#fde4e4" stroke="#f04040" stroke-width="0.7" stroke-linejoin="round"/><rect x="1470.2" y="184.4" width="10.5" height="7.3" fill="#f7eec6"/><circle cx="1478.8" cy="191" r="4.5" fill="#f7eec6"/><rect x="1470.2" y="184.4" width="10.5" height="7.3" fill="none" stroke="#5e5e5e" stroke-width="0.8"/><circle cx="1478.8" cy="191" r="4.5" fill="none" stroke="#5e5e5e" stroke-width="0.8"/><rect x="1468.3" y="230.3" width="17.4" height="11.4" rx="2.6" fill="#f7f7f3" stroke="#c3d2ea" stroke-width="1.1"/><rect x="1466.2" y="284.4" width="4.5" height="3" rx="0.5" fill="#000"/><rect x="1473.4" y="284.4" width="14.4" height="3" fill="#fff" stroke="#3a3a3a" stroke-width="0.7"/><rect x="1466.2" y="290.5" width="4.5" height="3" rx="0.5" fill="#000"/><rect x="1473.4" y="290.5" width="14.4" height="3" fill="#fff" stroke="#3a3a3a" stroke-width="0.7"/><rect x="1466.2" y="296.6" width="4.5" height="3" rx="0.5" fill="#000"/><rect x="1473.4" y="296.6" width="14.4" height="3" fill="#fff" stroke="#3a3a3a" stroke-width="0.7"/><path d="M1470.2 332.4 H1483.8 L1478.5 339.6 V345.4 L1475.6 343.6 V339.6 Z" fill="url(#gFun)" stroke="#6a6a6a" stroke-width="0.5"/><ellipse cx="1477" cy="332.2" rx="7" ry="1.6" fill="#6e6e6e"/><path d="M1468.9 377.3 L1473.7 380.6 V387.8 L1468.9 391.2 Z" fill="#f2f2f2" stroke="#555" stroke-width="0.7" stroke-linejoin="round"/><rect x="1473.7" y="380.3" width="3.4" height="7.7" fill="#efefef" stroke="#777" stroke-width="0.5"/><rect x="1477.1" y="380.3" width="8" height="7.7" rx="1.2" fill="url(#gScrew)" stroke="#666" stroke-width="0.5"/><path d="M1478.6 380.6 V387.8 M1480.4 380.6 V387.8 M1482.2 380.6 V387.8" stroke="#5c5c5c" stroke-width="0.6" opacity="0.7"/><path d="M1466.8 384.1 H1487" stroke="#f59aa0" stroke-width="0.9" stroke-dasharray="2.4 0.8 0.8 0.8"/><text x="1465.6" y="433.4" font-family="Liberation Sans, sans-serif" font-size="3.1" fill="#6e6e6e">Comando: line</text><text x="1465.6" y="436.9" font-family="Liberation Sans, sans-serif" font-size="3.1" fill="#6e6e6e">Comando: trim</text><text x="1465.6" y="440.2" font-family="Liberation Sans, sans-serif" font-size="3.1" fill="#6e6e6e">Comando: zoom</text><text x="1465.6" y="443.5" font-family="Liberation Sans, sans-serif" font-size="3.1" fill="#6e6e6e">Comando: move</text><path d="M1464 447 H1490" stroke="#222" stroke-width="0.6"/><text x="1465.8" y="450.4" font-family="Liberation Sans, sans-serif" font-size="3.2" fill="#333">C_</text><text x="1472.6" y="450.4" font-family="Liberation Sans, sans-serif" font-size="3.2" fill="#333">command</text><rect x="1470.3" y="480.9" width="12.7" height="13.1" rx="0.9" fill="#c98a24" stroke="#a06a14" stroke-width="0.5"/><rect x="1471.9" y="482.2" width="9.5" height="10.6" fill="#f4f4f4"/><path d="M1473.4 485.4 H1479.8 M1473.4 487.2 H1479.4 M1473.4 489 H1478" stroke="#cfcfcf" stroke-width="0.7"/><path d="M1478.6 492.8 L1478.8 490.2 L1481.4 489.9 Z" fill="#b4b4b4"/><rect x="1474.1" y="479.3" width="5.3" height="3.2" rx="0.7" fill="#a2a296" stroke="#6a6a62" stroke-width="0.5"/></svg></div>
<div id="status" style="-webkit-text-stroke:0.22px #111"><div class="t" style="left:2.40px;top:9.10px;font-size:9.5px;line-height:10.61px;color:#111;letter-spacing:0.412px;">47.3607,60.0448</div><div class="t" style="left:2.40px;top:29.60px;font-size:9.5px;line-height:10.61px;color:#111;letter-spacing:0.302px;">@47.3607,60.0448</div><div class="a" style="left:253px;top:4px;width:1px;height:40px;background:#8c8c8c"></div><div class="a" style="left:254px;top:4px;width:1px;height:40px;background:#f2f2f2"></div><div class="t" style="left:256.40px;top:9.10px;font-size:9.5px;line-height:10.61px;color:#111;letter-spacing:0.413px;">76.4749&lt;52°</div><div class="t" style="left:256.40px;top:29.60px;font-size:9.5px;line-height:10.61px;color:#111;letter-spacing:0.292px;">@76.4749&lt;52°</div><svg style="left:0;top:0" width="1500" height="46"><circle cx="509.4" cy="24.1" r="3" fill="#c8c8c8"/><circle cx="943.5" cy="24.1" r="3" fill="#c8c8c8"/><circle cx="1272.5" cy="24.1" r="3" fill="#c8c8c8"/></svg><div class="t" style="left:569.00px;top:19.32px;font-size:9.7px;line-height:10.83px;color:#111;letter-spacing:0.238px;">Seleccionar entidad o región</div><div class="t" style="left:949.30px;top:19.02px;font-size:9.7px;line-height:10.83px;color:#111;letter-spacing:0.214px;">No hay entidades seleccionadas.</div><svg style="left:716px;top:6px" width="20" height="33" viewBox="0 0 20 33">
<rect x="1.3" y="1.8" width="17.4" height="29.4" rx="8.7" ry="9" fill="#fff" stroke="#333" stroke-width="1"/>
<path d="M1.3 15.2 Q10 12.8 18.7 15.2" fill="none" stroke="#333" stroke-width="1"/>
<path d="M10 2 V4 M10 10.5 V14" stroke="#333" stroke-width="1"/>
<rect x="8.6" y="4" width="2.8" height="6.8" rx="1.4" fill="#fff" stroke="#333" stroke-width="0.9"/>
</svg></div>
<div class="a" style="left:918.7px;top:24.7px;width:42.3px;height:42.6px;background:rgba(240,70,70,0.22)"></div><svg style="left:0;top:0" width="1500" height="120" viewBox="0 0 1500 120">
<defs>
<linearGradient id="rh" x1="0" x2="1" y1="0" y2="0"><stop offset="0" stop-color="#f05050" stop-opacity="0"/><stop offset="0.15" stop-color="#f05050" stop-opacity="0.75"/><stop offset="0.85" stop-color="#f05050" stop-opacity="0.75"/><stop offset="1" stop-color="#f05050" stop-opacity="0"/></linearGradient>
<linearGradient id="rv" x1="0" x2="0" y1="0" y2="1"><stop offset="0" stop-color="#f05050" stop-opacity="0"/><stop offset="0.15" stop-color="#f05050" stop-opacity="0.75"/><stop offset="0.85" stop-color="#f05050" stop-opacity="0.75"/><stop offset="1" stop-color="#f05050" stop-opacity="0"/></linearGradient>
</defs>
<rect x="910" y="24" width="59" height="1.6" fill="url(#rh)"/>
<rect x="910" y="66.5" width="59" height="1.6" fill="url(#rh)"/>
<rect x="918" y="16" width="1.6" height="57" fill="url(#rv)"/>
<rect x="960.3" y="16" width="1.6" height="57" fill="url(#rv)"/>
<circle cx="949.7" cy="55.6" r="35.6" fill="rgba(140,165,200,0.05)" stroke="rgba(120,150,190,0.30)" stroke-width="5.5"/>
<path d="M950.3 55.3 L950.3 77.6 L955.3 73 L959.3 82.6 L963.2 81 L959.2 71.6 L966 71.3 Z" fill="#fff" stroke="#000" stroke-width="1.1" stroke-linejoin="round"/>
</svg>
</body></html>
